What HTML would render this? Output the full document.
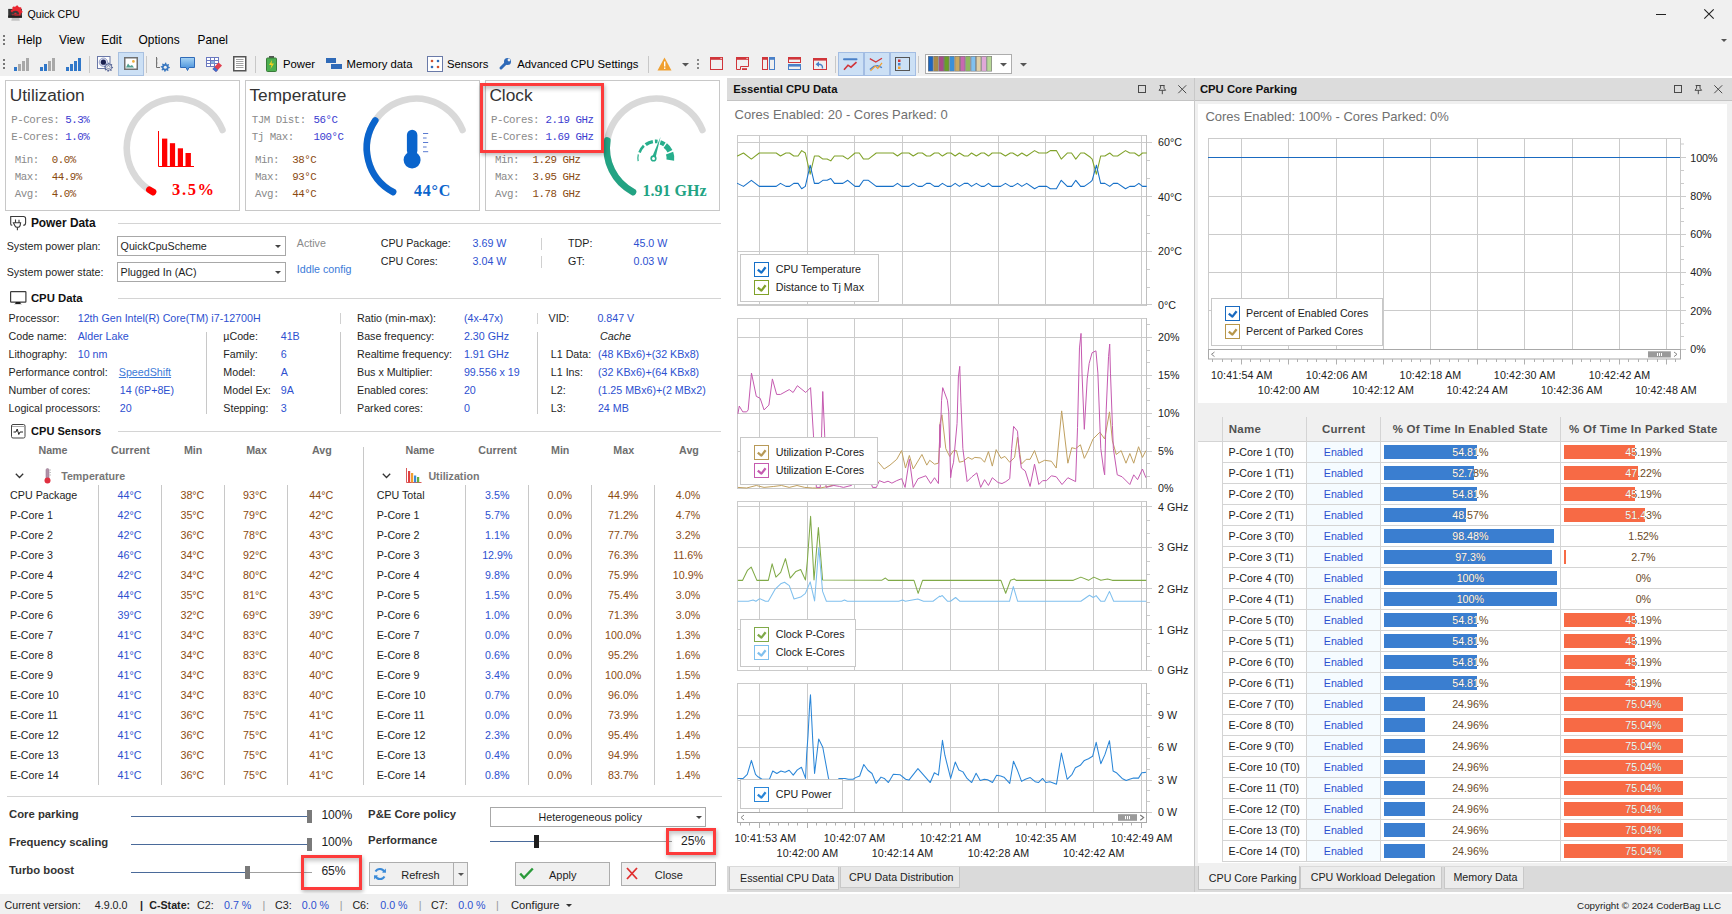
<!DOCTYPE html><html><head><meta charset="utf-8"><style>
html,body{margin:0;padding:0;}
body{width:1732px;height:914px;position:relative;overflow:hidden;background:#fff;font-family:"Liberation Sans", sans-serif;}
.t{position:absolute;line-height:0;white-space:pre;}
svg{position:absolute;overflow:visible;}
</style></head><body>
<div style="position:absolute;left:0px;top:0px;width:1732px;height:76px;background:#f0f0f0;"></div>
<svg style="left:4px;top:3px" width="24" height="20"><path d="M8 14.6 H15.2 L15.8 17.8 H7.3 Z" fill="#c4c4c4"/><rect x="4.2" y="5.9" width="13.7" height="8.8" fill="#333"/><polygon points="18.50,8.30 18.39,9.45 17.13,10.18 16.67,11.02 16.77,12.47 15.88,13.21 14.48,12.83 13.56,13.11 12.60,14.20 11.45,14.09 10.72,12.83 9.88,12.37 8.43,12.47 7.69,11.58 8.07,10.18 7.79,9.26 6.70,8.30 6.81,7.15 8.07,6.42 8.53,5.58 8.43,4.13 9.32,3.39 10.72,3.77 11.64,3.49 12.60,2.40 13.75,2.51 14.48,3.77 15.32,4.23 16.77,4.13 17.51,5.02 17.13,6.42 17.41,7.34" fill="#ea2630"/><path d="M7.6 11.5 A3.8 3.8 0 0 1 15.2 11.5 Z" fill="#3a3a3a"/><ellipse cx="11.4" cy="10.4" rx="1.2" ry="0.7" fill="#ea2630"/><rect x="4.2" y="12.6" width="13.7" height="2.1" fill="#222"/></svg>
<div class="t" style="top:13.62px;font-size:10.6px;color:#000;left:27.5px;">Quick CPU</div>
<div style="position:absolute;left:1656px;top:14px;width:10px;height:1.2px;background:#222;"></div>
<svg style="left:1704px;top:9px" width="10" height="10"><path d="M0.3 0.3 L9.7 9.7 M9.7 0.3 L0.3 9.7" stroke="#222" stroke-width="1.1"/></svg>
<div style="position:absolute;left:3px;top:35px;width:2px;height:2px;background:#777;"></div>
<div style="position:absolute;left:3px;top:39px;width:2px;height:2px;background:#777;"></div>
<div style="position:absolute;left:3px;top:43px;width:2px;height:2px;background:#777;"></div>
<div class="t" style="top:40.07px;font-size:11.9px;color:#000;left:17.3px;">Help</div>
<div class="t" style="top:40.07px;font-size:11.9px;color:#000;left:59px;">View</div>
<div class="t" style="top:40.07px;font-size:11.9px;color:#000;left:101.3px;">Edit</div>
<div class="t" style="top:40.07px;font-size:11.9px;color:#000;left:138.6px;">Options</div>
<div class="t" style="top:40.07px;font-size:11.9px;color:#000;left:197.5px;">Panel</div>
<svg style="left:1721px;top:39px" width="6" height="3"><path d="M0 0 L6 0 L3 3 Z" fill="#555"/></svg>
<div style="position:absolute;left:3px;top:59px;width:2px;height:2px;background:#777;"></div>
<div style="position:absolute;left:3px;top:63px;width:2px;height:2px;background:#777;"></div>
<div style="position:absolute;left:3px;top:67px;width:2px;height:2px;background:#777;"></div>
<svg style="left:14px;top:57px" width="16" height="14"><rect x="0" y="10" width="3" height="4" fill="#2f77c9"/><rect x="4" y="7" width="3" height="7" fill="#a8a8a8"/><rect x="8" y="4" width="3" height="10" fill="#a8a8a8"/><rect x="12" y="1" width="3" height="13" fill="#a8a8a8"/></svg>
<svg style="left:40px;top:57px" width="16" height="14"><rect x="0" y="10" width="3" height="4" fill="#2f77c9"/><rect x="4" y="7" width="3" height="7" fill="#2f77c9"/><rect x="8" y="4" width="3" height="10" fill="#a8a8a8"/><rect x="12" y="1" width="3" height="13" fill="#a8a8a8"/></svg>
<svg style="left:66px;top:57px" width="16" height="14"><rect x="0" y="10" width="3" height="4" fill="#2f77c9"/><rect x="4" y="7" width="3" height="7" fill="#2f77c9"/><rect x="8" y="4" width="3" height="10" fill="#2f77c9"/><rect x="12" y="1" width="3" height="13" fill="#2f77c9"/></svg>
<div style="position:absolute;left:89px;top:56px;width:1px;height:17px;background:#c8c8c8;"></div>
<div style="position:absolute;left:146px;top:56px;width:1px;height:17px;background:#c8c8c8;"></div>
<div style="position:absolute;left:255px;top:56px;width:1px;height:17px;background:#c8c8c8;"></div>
<svg style="left:96px;top:55px" width="20" height="20"><rect x="1.5" y="1.5" width="12.5" height="12" fill="#fff" stroke="#6a78a8" stroke-width="1"/><circle cx="7.4" cy="7.2" r="4.2" fill="#d8dcf0" stroke="#8a94c0" stroke-width="0.8"/><circle cx="7.4" cy="7.2" r="2.6" fill="#1a2050"/><polygon points="17.10,12.20 17.01,13.10 15.64,13.50 15.33,14.09 15.75,15.45 15.06,16.02 13.80,15.34 13.16,15.53 12.50,16.80 11.60,16.71 11.20,15.34 10.61,15.03 9.25,15.45 8.68,14.76 9.36,13.50 9.17,12.86 7.90,12.20 7.99,11.30 9.36,10.90 9.67,10.31 9.25,8.95 9.94,8.38 11.20,9.06 11.84,8.87 12.50,7.60 13.40,7.69 13.80,9.06 14.39,9.37 15.75,8.95 16.32,9.64 15.64,10.90 15.83,11.54" fill="#5a6898"/><circle cx="12.5" cy="12.2" r="1.3" fill="#f0f0f0"/><circle cx="12.5" cy="12.2" r="2.3" fill="none" stroke="#f0f0f0" stroke-width="0.9"/></svg>
<div style="position:absolute;left:118px;top:52px;width:26px;height:24px;background:#cce0f5;border:1px solid #a8c0e0;box-sizing:border-box;"></div>
<svg style="left:124px;top:57px" width="14" height="13"><rect x="0.75" y="0.75" width="12.5" height="11.5" fill="#fff" stroke="#707070" stroke-width="1.5"/><path d="M2 10.5 L4 6.5 L6 9 L8 8 L10 10.5 Z" fill="#50a090"/><circle cx="9.4" cy="4.4" r="1.4" fill="#f0b040"/></svg>
<svg style="left:155px;top:56px" width="16" height="17"><path d="M1.5 1 V11.5 H5" fill="none" stroke="#707070" stroke-width="1"/><path d="M1.5 3 H3 M1.5 5 H2.5 M1.5 7 H3 M1.5 9 H2.5" stroke="#909090" stroke-width="0.8"/><polygon points="14.90,11.20 14.81,12.10 13.35,12.46 13.04,13.03 13.55,14.45 12.86,15.02 11.56,14.25 10.94,14.44 10.30,15.80 9.40,15.71 9.04,14.25 8.47,13.94 7.05,14.45 6.48,13.76 7.25,12.46 7.06,11.84 5.70,11.20 5.79,10.30 7.25,9.94 7.56,9.37 7.05,7.95 7.74,7.38 9.04,8.15 9.66,7.96 10.30,6.60 11.20,6.69 11.56,8.15 12.13,8.46 13.55,7.95 14.12,8.64 13.35,9.94 13.54,10.56" fill="#3a78c0"/><circle cx="10.3" cy="11.2" r="1.5" fill="#f0f0f0"/></svg>
<svg style="left:179px;top:56px" width="17" height="16"><defs><linearGradient id="cb" x1="0" y1="0" x2="0" y2="1"><stop offset="0" stop-color="#a8d4f4"/><stop offset="1" stop-color="#3a88d8"/></linearGradient></defs><path d="M1.5 1.5 H15.5 V11.5 H10 L8.5 14.5 L7 11.5 H1.5 Z" fill="url(#cb)" stroke="#2f6ab8" stroke-width="1"/></svg>
<svg style="left:205px;top:56px" width="18" height="17"><rect x="1.5" y="1.5" width="12" height="9" fill="#fff" stroke="#6a78c0"/><path d="M1.5 4.5 H13.5 M1.5 7.5 H13.5 M5.5 1.5 V10.5 M9.5 1.5 V10.5" stroke="#6a78c0" stroke-width="1"/><rect x="6" y="5" width="3.5" height="2.5" fill="#8ab0e0"/><path d="M7.5 13 L13.5 6.5 L17 9.5 L11 16 Z" fill="#e04050"/><path d="M7.5 13 L9.5 11 L13 14 L11 16 Z" fill="#3a70d0"/></svg>
<svg style="left:233px;top:56px" width="14" height="16"><rect x="0.75" y="0.75" width="12" height="14" fill="#fff" stroke="#555" stroke-width="1.5"/><path d="M3 3.5 H10.5 M3 5.5 H10.5 M3 7.5 H10.5 M3 9.5 H10.5 M3 11.5 H10.5" stroke="#999" stroke-width="0.9"/></svg>
<svg style="left:266px;top:56px" width="11" height="16"><rect x="3" y="0" width="5" height="2" fill="#555"/><rect x="0.5" y="2" width="10" height="13.5" rx="1" fill="#4caf50" stroke="#3a7a3a"/><path d="M6 4 L3 9 H5.5 L4.5 13 L8 7.5 H5.5 Z" fill="#f5d020"/></svg>
<div class="t" style="top:64.38px;font-size:11.3px;color:#000;left:283px;">Power</div>
<svg style="left:326px;top:58px" width="16" height="12"><rect x="0" y="0" width="10" height="5" fill="#2f6ab8"/><rect x="5" y="6" width="11" height="5" fill="#2f6ab8"/></svg>
<div class="t" style="top:64.38px;font-size:11.3px;color:#000;left:346.5px;">Memory data</div>
<svg style="left:427px;top:56px" width="16" height="16"><rect x="0.5" y="0.5" width="15" height="15" fill="#fff" stroke="#6a7aa8"/><circle cx="5" cy="5" r="1.3" fill="#d05030"/><circle cx="11" cy="5" r="1.3" fill="#2f6ab8"/><circle cx="5" cy="11" r="1.3" fill="#2f6ab8"/><circle cx="11" cy="11" r="1.3" fill="#d05030"/></svg>
<div class="t" style="top:64.38px;font-size:11.3px;color:#000;left:447px;">Sensors</div>
<svg style="left:499px;top:57px" width="13" height="13"><path d="M2 11 L7 6" stroke="#2f6ab8" stroke-width="3" stroke-linecap="round"/><circle cx="8.5" cy="4.5" r="3.5" fill="#2f6ab8"/><circle cx="10" cy="3" r="1.4" fill="#f0f0f0"/></svg>
<div class="t" style="top:64.38px;font-size:11.3px;color:#000;left:517.2px;">Advanced CPU Settings</div>
<div style="position:absolute;left:648px;top:56px;width:1px;height:17px;background:#c8c8c8;"></div>
<svg style="left:657px;top:57px" width="15" height="14"><path d="M7.5 0.5 L14.5 13.5 H0.5 Z" fill="#f0a030"/><rect x="7" y="4.5" width="1.4" height="5" fill="#fff"/><rect x="7" y="10.5" width="1.4" height="1.4" fill="#fff"/></svg>
<svg style="left:682px;top:63px" width="7" height="4"><path d="M0 0 H7 L3.5 3.5 Z" fill="#555"/></svg>
<div style="position:absolute;left:697px;top:59px;width:2px;height:2px;background:#888;"></div>
<div style="position:absolute;left:697px;top:63px;width:2px;height:2px;background:#888;"></div>
<div style="position:absolute;left:697px;top:67px;width:2px;height:2px;background:#888;"></div>
<svg style="left:710px;top:57px" width="13" height="13"><rect x="0.5" y="0.5" width="12" height="12" fill="none" stroke="#d0353a"/><rect x="0" y="0" width="13" height="2.8" fill="#d0353a"/><circle cx="11.1" cy="1.4" r="0.6" fill="#fff"/></svg>
<svg style="left:736px;top:57px" width="14" height="13"><path d="M0.5 12.5 V0.5 H12.5 V9.5 H4.5 V12.5 Z" fill="none" stroke="#d0353a"/><rect x="0" y="0" width="13" height="2.8" fill="#d0353a"/><circle cx="11.1" cy="1.4" r="0.6" fill="#fff"/><rect x="6" y="11.2" width="5" height="1.8" fill="#d0353a"/></svg>
<svg style="left:762px;top:57px" width="14" height="13"><rect x="0.5" y="0.5" width="5" height="12" fill="none" stroke="#d0353a"/><rect x="0" y="0" width="6" height="2.8" fill="#d0353a"/><rect x="7.5" y="0.5" width="5" height="12" fill="none" stroke="#4a80c8"/><rect x="7" y="0" width="6" height="2.8" fill="#4a80c8"/></svg>
<svg style="left:788px;top:57px" width="14" height="13"><rect x="0.5" y="0.5" width="12" height="5" fill="none" stroke="#d0353a"/><rect x="0" y="0" width="13" height="2.6" fill="#d0353a"/><rect x="0.5" y="7.5" width="12" height="5" fill="none" stroke="#4a80c8"/><rect x="0" y="7" width="13" height="2.6" fill="#4a80c8"/></svg>
<svg style="left:813px;top:58px" width="14" height="12"><rect x="0.5" y="0.5" width="13" height="11" fill="none" stroke="#d0353a"/><rect x="0" y="0" width="14" height="2.6" fill="#d0353a"/><path d="M9.5 10.5 Q9.8 6.2 5.5 6.2" fill="none" stroke="#4a80c8" stroke-width="1.4"/><path d="M2.6 6.3 L6 3.6 L6 8.9 Z" fill="#4a80c8"/></svg>
<div style="position:absolute;left:835px;top:56px;width:1px;height:17px;background:#c8c8c8;"></div>
<div style="position:absolute;left:838px;top:52px;width:26px;height:24px;background:#cce0f5;border:1px solid #a3bde3;box-sizing:border-box;"></div>
<div style="position:absolute;left:864px;top:52px;width:26px;height:24px;background:#cce0f5;border:1px solid #a3bde3;box-sizing:border-box;"></div>
<div style="position:absolute;left:890px;top:52px;width:26px;height:24px;background:#cce0f5;border:1px solid #a3bde3;box-sizing:border-box;"></div>
<svg style="left:843px;top:57px" width="15" height="14"><path d="M1 2.2 H13.5" stroke="#4a80c8" stroke-width="2" stroke-linecap="round"/><path d="M1 12.8 L5 8.2 L8 10.2 L13.5 5.2" fill="none" stroke="#d0353a" stroke-width="1.6"/></svg>
<svg style="left:869px;top:57px" width="15" height="15"><path d="M0.8 1.6 L6.8 5 L13 1.2" fill="none" stroke="#d0353a" stroke-width="1.3"/><path d="M0.8 12.5 L4.8 9.3 L8.5 8.6 L13 10.6" fill="none" stroke="#4a80c8" stroke-width="1.2"/><path d="M1.5 13.8 L6.3 9 L8.8 11.4 L13 5.8" fill="none" stroke="#f0a030" stroke-width="1.2"/></svg>
<svg style="left:895px;top:57px" width="15" height="14"><rect x="0.5" y="0.5" width="14" height="13" fill="none" stroke="#555"/><rect x="3" y="2.5" width="2.5" height="2.5" fill="#d0353a"/><rect x="3" y="6" width="2.5" height="2.5" fill="#4a80c8"/><rect x="3" y="9.5" width="2.5" height="2.5" fill="#f0a030"/></svg>
<div style="position:absolute;left:918px;top:56px;width:1px;height:17px;background:#c8c8c8;"></div>
<div style="position:absolute;left:925px;top:54px;width:87px;height:20px;background:#fff;border:1px solid #adadad;box-sizing:border-box;"></div>
<svg style="left:928px;top:56px" width="66" height="16"><rect x="0.00" y="0" width="5.33" height="15.5" fill="#7a7a7a"/><rect x="0.60" y="0.6" width="4.1" height="14.3" fill="#1a66c0"/><rect x="5.33" y="0" width="5.33" height="15.5" fill="#7a7a7a"/><rect x="5.93" y="0.6" width="4.1" height="14.3" fill="#a88a48"/><rect x="10.66" y="0" width="5.33" height="15.5" fill="#7a7a7a"/><rect x="11.26" y="0.6" width="4.1" height="14.3" fill="#a84c88"/><rect x="15.99" y="0" width="5.33" height="15.5" fill="#7a7a7a"/><rect x="16.59" y="0.6" width="4.1" height="14.3" fill="#6a9e28"/><rect x="21.32" y="0" width="5.33" height="15.5" fill="#7a7a7a"/><rect x="21.92" y="0.6" width="4.1" height="14.3" fill="#3a90d8"/><rect x="26.65" y="0" width="5.33" height="15.5" fill="#7a7a7a"/><rect x="27.25" y="0.6" width="4.1" height="14.3" fill="#c8a860"/><rect x="31.98" y="0" width="5.33" height="15.5" fill="#7a7a7a"/><rect x="32.58" y="0.6" width="4.1" height="14.3" fill="#c868b0"/><rect x="37.31" y="0" width="5.33" height="15.5" fill="#7a7a7a"/><rect x="37.91" y="0.6" width="4.1" height="14.3" fill="#90b860"/><rect x="42.64" y="0" width="5.33" height="15.5" fill="#7a7a7a"/><rect x="43.24" y="0.6" width="4.1" height="14.3" fill="#80c0f0"/><rect x="47.97" y="0" width="5.33" height="15.5" fill="#7a7a7a"/><rect x="48.57" y="0.6" width="4.1" height="14.3" fill="#e0d0a8"/><rect x="53.30" y="0" width="5.33" height="15.5" fill="#7a7a7a"/><rect x="53.90" y="0.6" width="4.1" height="14.3" fill="#e0a8d8"/><rect x="58.63" y="0" width="5.33" height="15.5" fill="#7a7a7a"/><rect x="59.23" y="0.6" width="4.1" height="14.3" fill="#b8d898"/></svg>
<svg style="left:1000px;top:63px" width="7" height="4"><path d="M0 0 H7 L3.5 3.5 Z" fill="#555"/></svg>
<svg style="left:1020px;top:63px" width="7" height="4"><path d="M0 0 H7 L3.5 3.5 Z" fill="#555"/></svg>
<div style="position:absolute;left:5.25px;top:80px;width:235px;height:131px;border:1px solid #c8c8c8;box-sizing:border-box;background:#fff;"></div>
<div style="position:absolute;left:245.3px;top:80px;width:235px;height:131px;border:1px solid #c8c8c8;box-sizing:border-box;background:#fff;"></div>
<div style="position:absolute;left:485.2px;top:80px;width:235px;height:131px;border:1px solid #c8c8c8;box-sizing:border-box;background:#fff;"></div>
<div class="t" style="top:94.90px;font-size:17.3px;color:#333;left:9.8px;">Utilization</div>
<div class="t" style="top:120.43px;font-size:10.8px;color:#8a8a8a;font-family:'Liberation Mono', monospace;letter-spacing:-0.48px;left:11.2px;">P-Cores:</div>
<div class="t" style="top:120.43px;font-size:10.8px;color:#3b3bd0;font-family:'Liberation Mono', monospace;letter-spacing:-0.48px;left:65.3px;">5.3%</div>
<div class="t" style="top:136.93px;font-size:10.8px;color:#8a8a8a;font-family:'Liberation Mono', monospace;letter-spacing:-0.48px;left:11.2px;">E-Cores:</div>
<div class="t" style="top:136.93px;font-size:10.8px;color:#3b3bd0;font-family:'Liberation Mono', monospace;letter-spacing:-0.48px;left:65.3px;">1.0%</div>
<div class="t" style="top:159.83px;font-size:10.8px;color:#8a8a8a;font-family:'Liberation Mono', monospace;letter-spacing:-0.48px;left:14.8px;">Min:</div>
<div class="t" style="top:159.83px;font-size:10.8px;color:#8a4a10;font-family:'Liberation Mono', monospace;letter-spacing:-0.48px;left:51.7px;">0.0%</div>
<div class="t" style="top:177.13px;font-size:10.8px;color:#8a8a8a;font-family:'Liberation Mono', monospace;letter-spacing:-0.48px;left:14.8px;">Max:</div>
<div class="t" style="top:177.13px;font-size:10.8px;color:#8a4a10;font-family:'Liberation Mono', monospace;letter-spacing:-0.48px;left:51.7px;">44.9%</div>
<div class="t" style="top:194.33px;font-size:10.8px;color:#8a8a8a;font-family:'Liberation Mono', monospace;letter-spacing:-0.48px;left:14.8px;">Avg:</div>
<div class="t" style="top:194.33px;font-size:10.8px;color:#8a4a10;font-family:'Liberation Mono', monospace;letter-spacing:-0.48px;left:51.7px;">4.0%</div>
<svg style="left:0;top:0" width="1732" height="300"><path d="M153.06 191.99 A49.6 49.6 0 1 1 222.50 130.02" stroke="#d9d9d9" stroke-width="6.6" fill="none" stroke-linecap="round"/><path d="M153.06 191.99 A49.6 49.6 0 0 1 149.34 189.80" stroke="#ff0000" stroke-width="6.6" fill="none" stroke-linecap="round"/></svg>
<svg style="left:158px;top:131px" width="37" height="37"><path d="M0.5 0 V35.5 H36" stroke="#ff0000" stroke-width="1" fill="none"/><rect x="4" y="7.6" width="5.3" height="28" fill="#f00"/><rect x="11.9" y="12.2" width="5.2" height="23.4" fill="#f00"/><rect x="19.8" y="17.3" width="5.2" height="18.3" fill="#f00"/><rect x="27.5" y="22" width="5.4" height="13.6" fill="#f00"/></svg>
<div class="t" style="top:190.43px;font-size:16.5px;color:#ff0000;font-family:'Liberation Serif', serif;font-weight:bold;letter-spacing:1.6px;left:172.1px;">3.5%</div>
<div class="t" style="top:94.90px;font-size:17.3px;color:#333;left:249.4px;">Temperature</div>
<div class="t" style="top:120.43px;font-size:10.8px;color:#8a8a8a;font-family:'Liberation Mono', monospace;letter-spacing:-0.48px;left:251.8px;">TJM Dist:</div>
<div class="t" style="top:120.43px;font-size:10.8px;color:#3b3bd0;font-family:'Liberation Mono', monospace;letter-spacing:-0.48px;left:313.5px;">56°C</div>
<div class="t" style="top:136.93px;font-size:10.8px;color:#8a8a8a;font-family:'Liberation Mono', monospace;letter-spacing:-0.48px;left:251.8px;">Tj Max:</div>
<div class="t" style="top:136.93px;font-size:10.8px;color:#3b3bd0;font-family:'Liberation Mono', monospace;letter-spacing:-0.48px;left:313.5px;">100°C</div>
<div class="t" style="top:159.83px;font-size:10.8px;color:#8a8a8a;font-family:'Liberation Mono', monospace;letter-spacing:-0.48px;left:254.9px;">Min:</div>
<div class="t" style="top:159.83px;font-size:10.8px;color:#8a4a10;font-family:'Liberation Mono', monospace;letter-spacing:-0.48px;left:292.2px;">38°C</div>
<div class="t" style="top:177.13px;font-size:10.8px;color:#8a8a8a;font-family:'Liberation Mono', monospace;letter-spacing:-0.48px;left:254.9px;">Max:</div>
<div class="t" style="top:177.13px;font-size:10.8px;color:#8a4a10;font-family:'Liberation Mono', monospace;letter-spacing:-0.48px;left:292.2px;">93°C</div>
<div class="t" style="top:194.33px;font-size:10.8px;color:#8a8a8a;font-family:'Liberation Mono', monospace;letter-spacing:-0.48px;left:254.9px;">Avg:</div>
<div class="t" style="top:194.33px;font-size:10.8px;color:#8a4a10;font-family:'Liberation Mono', monospace;letter-spacing:-0.48px;left:292.2px;">44°C</div>
<svg style="left:0;top:0" width="1732" height="300"><path d="M393.11 191.99 A49.6 49.6 0 1 1 462.55 130.02" stroke="#d9d9d9" stroke-width="6.6" fill="none" stroke-linecap="round"/><path d="M393.11 191.99 A49.6 49.6 0 0 1 375.28 120.46" stroke="#0a64cc" stroke-width="6.6" fill="none" stroke-linecap="round"/></svg>
<svg style="left:403px;top:129px" width="26" height="40"><rect x="3.9" y="0.8" width="10.5" height="26" rx="5.25" fill="#0a64cc"/><circle cx="9.1" cy="31" r="8.5" fill="#0a64cc"/><path d="M20 4.5 H25.2 M20 9 H23.6 M20 13.5 H25.2 M20 18 H23.6 M20 22.7 H25.2" stroke="#5a7ad0" stroke-width="1"/></svg>
<div class="t" style="top:190.80px;font-size:16px;color:#0a64cc;font-family:'Liberation Serif', serif;font-weight:bold;letter-spacing:0.8px;left:174px;margin-left:240px;">44°C</div>
<div class="t" style="top:94.90px;font-size:17.3px;color:#333;left:489.4px;">Clock</div>
<div class="t" style="top:120.43px;font-size:10.8px;color:#8a8a8a;font-family:'Liberation Mono', monospace;letter-spacing:-0.48px;left:491.1px;">P-Cores:</div>
<div class="t" style="top:120.43px;font-size:10.8px;color:#3b3bd0;font-family:'Liberation Mono', monospace;letter-spacing:-0.48px;left:545.6px;">2.19 GHz</div>
<div class="t" style="top:136.93px;font-size:10.8px;color:#8a8a8a;font-family:'Liberation Mono', monospace;letter-spacing:-0.48px;left:491.1px;">E-Cores:</div>
<div class="t" style="top:136.93px;font-size:10.8px;color:#3b3bd0;font-family:'Liberation Mono', monospace;letter-spacing:-0.48px;left:545.6px;">1.69 GHz</div>
<div class="t" style="top:159.83px;font-size:10.8px;color:#8a8a8a;font-family:'Liberation Mono', monospace;letter-spacing:-0.48px;left:495px;">Min:</div>
<div class="t" style="top:159.83px;font-size:10.8px;color:#8a4a10;font-family:'Liberation Mono', monospace;letter-spacing:-0.48px;left:532.5px;">1.29 GHz</div>
<div class="t" style="top:177.13px;font-size:10.8px;color:#8a8a8a;font-family:'Liberation Mono', monospace;letter-spacing:-0.48px;left:495px;">Max:</div>
<div class="t" style="top:177.13px;font-size:10.8px;color:#8a4a10;font-family:'Liberation Mono', monospace;letter-spacing:-0.48px;left:532.5px;">3.95 GHz</div>
<div class="t" style="top:194.33px;font-size:10.8px;color:#8a8a8a;font-family:'Liberation Mono', monospace;letter-spacing:-0.48px;left:495px;">Avg:</div>
<div class="t" style="top:194.33px;font-size:10.8px;color:#8a4a10;font-family:'Liberation Mono', monospace;letter-spacing:-0.48px;left:532.5px;">1.78 GHz</div>
<svg style="left:0;top:0" width="1732" height="300"><path d="M633.01 191.99 A49.6 49.6 0 1 1 702.45 130.02" stroke="#d9d9d9" stroke-width="6.6" fill="none" stroke-linecap="round"/><path d="M633.01 191.99 A49.6 49.6 0 0 1 607.31 140.44" stroke="#22a383" stroke-width="6.6" fill="none" stroke-linecap="round"/></svg>
<svg style="left:630px;top:125px" width="50" height="40"><path d="M8.17 36.21 A17.9 17.9 0 0 1 8.29 29.38" stroke="#27ae8c" stroke-width="1.2" fill="none"/><path d="M9.54 27.50 A17.2 17.2 0 0 1 13.85 20.73" stroke="#27ae8c" stroke-width="2.6" fill="none"/><path d="M15.72 19.72 A16.75 16.75 0 0 1 22.89 16.60" stroke="#27ae8c" stroke-width="3.5" fill="none"/><path d="M24.93 16.42 A16.7 16.7 0 0 1 27.55 16.49" stroke="#27ae8c" stroke-width="3.6" fill="none"/><path d="M30.29 17.43 A16.3 16.3 0 0 1 34.44 19.28" stroke="#27ae8c" stroke-width="4.4" fill="none"/><path d="M35.28 20.52 A15.75 15.75 0 0 1 39.96 26.20" stroke="#27ae8c" stroke-width="5.5" fill="none"/><path d="M39.57 28.09 A14.65 14.65 0 0 1 40.31 35.14" stroke="#27ae8c" stroke-width="7.7" fill="none"/><path d="M21.79 32.84 L30.59 11.84 L25.21 33.96 Z" fill="#27ae8c"/><circle cx="23.5" cy="33.4" r="3.1" fill="#27ae8c"/><circle cx="23.5" cy="33.4" r="1.5" fill="#fff"/></svg>
<div class="t" style="top:190.80px;font-size:16px;color:#22a383;font-family:'Liberation Serif', serif;font-weight:bold;left:642.5px;">1.91 GHz</div>
<div style="position:absolute;left:479.9px;top:82.9px;width:124.2px;height:70px;border:3px solid #fd3b3b;box-sizing:border-box;box-shadow:1px 2px 4px rgba(0,0,0,0.28), inset 1px 3px 4px rgba(0,0,0,0.22);"></div>
<svg style="left:10px;top:215px" width="18" height="17"><path d="M0.7 9 V1.5 H13.5 Q15.6 1.5 15.6 3.6 V8 Q15.6 10.3 13.2 10.3 M0.7 9 Q0.7 10.3 2.3 10.3" fill="none" stroke="#3a3a3a" stroke-width="1.1"/><path d="M3.4 7.7 H10.6 L10.1 10.8 Q9.5 12.4 7.5 12.4 Q5.5 12.4 4.9 10.8 Z M7.4 12.4 V15.3 M5.5 4.4 V7.7 M9 4.8 V7.7" fill="#fff" stroke="#3a3a3a" stroke-width="1.1"/></svg>
<div class="t" style="top:222.97px;font-size:11.9px;color:#111;font-weight:bold;left:30.9px;">Power Data</div>
<div style="position:absolute;left:118px;top:223px;width:603px;height:1px;background:#d4d4d4;"></div>
<div class="t" style="top:246.09px;font-size:10.7px;color:#1e1e1e;left:6.7px;">System power plan:</div>
<div class="t" style="top:272.09px;font-size:10.7px;color:#1e1e1e;left:6.7px;">System power state:</div>
<div style="position:absolute;left:117.2px;top:236.3px;width:168.6px;height:19.4px;border:1px solid #a8a8a8;box-sizing:border-box;background:#fff;"></div>
<div class="t" style="top:246.49px;font-size:10.7px;color:#1e1e1e;left:120.6px;">QuickCpuScheme</div>
<svg style="left:275px;top:244.8px" width="6" height="3"><path d="M0 0 H6 L3 3 Z" fill="#444"/></svg>
<div style="position:absolute;left:117.2px;top:262.3px;width:168.6px;height:19.4px;border:1px solid #a8a8a8;box-sizing:border-box;background:#fff;"></div>
<div class="t" style="top:272.19px;font-size:10.7px;color:#1e1e1e;left:120.6px;">Plugged In (AC)</div>
<svg style="left:275px;top:270.8px" width="6" height="3"><path d="M0 0 H6 L3 3 Z" fill="#444"/></svg>
<div class="t" style="top:243.09px;font-size:10.7px;color:#8a8a8a;left:296.8px;">Active</div>
<div class="t" style="top:268.99px;font-size:10.7px;color:#3c7ad8;left:296.8px;">Iddle config</div>
<div class="t" style="top:243.09px;font-size:10.7px;color:#1e1e1e;left:380.7px;">CPU Package:</div>
<div class="t" style="top:243.09px;font-size:10.7px;color:#2d50d0;left:472.6px;">3.69 W</div>
<div class="t" style="top:261.49px;font-size:10.7px;color:#1e1e1e;left:380.7px;">CPU Cores:</div>
<div class="t" style="top:261.49px;font-size:10.7px;color:#2d50d0;left:472.6px;">3.04 W</div>
<div style="position:absolute;left:541px;top:238px;width:1px;height:12px;background:#d0d0d0;"></div>
<div style="position:absolute;left:541px;top:256px;width:1px;height:12px;background:#d0d0d0;"></div>
<div class="t" style="top:243.09px;font-size:10.7px;color:#1e1e1e;left:568px;">TDP:</div>
<div class="t" style="top:243.09px;font-size:10.7px;color:#2d50d0;left:633.5px;">45.0 W</div>
<div class="t" style="top:261.49px;font-size:10.7px;color:#1e1e1e;left:568px;">GT:</div>
<div class="t" style="top:261.49px;font-size:10.7px;color:#2d50d0;left:633.5px;">0.03 W</div>
<svg style="left:10px;top:291px" width="17" height="15"><rect x="0.6" y="0.7" width="15.3" height="10.4" rx="0.6" fill="#fff" stroke="#3c3c3c" stroke-width="1.2"/><path d="M5.8 11.3 H10.2 L10.9 13 H5.1 Z" fill="#000"/><path d="M4 13.3 H12" stroke="#ccc" stroke-width="0.8"/></svg>
<div class="t" style="top:297.86px;font-size:11.35px;color:#111;font-weight:bold;left:30.9px;">CPU Data</div>
<div style="position:absolute;left:118px;top:298px;width:603px;height:1px;background:#d4d4d4;"></div>
<div class="t" style="top:318.39px;font-size:10.7px;color:#1e1e1e;left:8.5px;">Processor:</div>
<div class="t" style="top:318.39px;font-size:10.7px;color:#2d50d0;left:77.7px;">12th Gen Intel(R) Core(TM) i7-12700H</div>
<div class="t" style="top:336.29px;font-size:10.7px;color:#1e1e1e;left:8.5px;">Code name:</div>
<div class="t" style="top:336.29px;font-size:10.7px;color:#2d50d0;left:77.7px;">Alder Lake</div>
<div class="t" style="top:354.19px;font-size:10.7px;color:#1e1e1e;left:8.5px;">Lithography:</div>
<div class="t" style="top:354.19px;font-size:10.7px;color:#2d50d0;left:77.7px;">10 nm</div>
<div class="t" style="top:372.09px;font-size:10.7px;color:#1e1e1e;left:8.5px;">Performance control:</div>
<div class="t" style="top:372.09px;font-size:10.7px;color:#3c7ad8;text-decoration:underline;left:118.8px;">SpeedShift</div>
<div class="t" style="top:389.99px;font-size:10.7px;color:#1e1e1e;left:8.5px;">Number of cores:</div>
<div class="t" style="top:389.99px;font-size:10.7px;color:#2d50d0;left:119.7px;">14 (6P+8E)</div>
<div class="t" style="top:407.89px;font-size:10.7px;color:#1e1e1e;left:8.5px;">Logical processors:</div>
<div class="t" style="top:407.89px;font-size:10.7px;color:#2d50d0;left:119.7px;">20</div>
<div style="position:absolute;left:206px;top:332px;width:1px;height:82px;background:#c8c8c8;"></div>
<div class="t" style="top:336.29px;font-size:10.7px;color:#1e1e1e;left:223.3px;">µCode:</div>
<div class="t" style="top:336.29px;font-size:10.7px;color:#2d50d0;left:280.7px;">41B</div>
<div class="t" style="top:354.19px;font-size:10.7px;color:#1e1e1e;left:223.3px;">Family:</div>
<div class="t" style="top:354.19px;font-size:10.7px;color:#2d50d0;left:280.7px;">6</div>
<div class="t" style="top:372.09px;font-size:10.7px;color:#1e1e1e;left:223.3px;">Model:</div>
<div class="t" style="top:372.09px;font-size:10.7px;color:#2d50d0;left:280.7px;">A</div>
<div class="t" style="top:389.99px;font-size:10.7px;color:#1e1e1e;left:223.3px;">Model Ex:</div>
<div class="t" style="top:389.99px;font-size:10.7px;color:#2d50d0;left:280.7px;">9A</div>
<div class="t" style="top:407.89px;font-size:10.7px;color:#1e1e1e;left:223.3px;">Stepping:</div>
<div class="t" style="top:407.89px;font-size:10.7px;color:#2d50d0;left:280.7px;">3</div>
<div style="position:absolute;left:340px;top:313px;width:1px;height:11px;background:#d0d0d0;"></div>
<div style="position:absolute;left:340px;top:332px;width:1px;height:82px;background:#c8c8c8;"></div>
<div class="t" style="top:318.39px;font-size:10.7px;color:#1e1e1e;left:357px;">Ratio (min-max):</div>
<div class="t" style="top:318.39px;font-size:10.7px;color:#2d50d0;left:463.9px;">(4x-47x)</div>
<div class="t" style="top:336.29px;font-size:10.7px;color:#1e1e1e;left:357px;">Base frequency:</div>
<div class="t" style="top:336.29px;font-size:10.7px;color:#2d50d0;left:463.9px;">2.30 GHz</div>
<div class="t" style="top:354.19px;font-size:10.7px;color:#1e1e1e;left:357px;">Realtime frequency:</div>
<div class="t" style="top:354.19px;font-size:10.7px;color:#2d50d0;left:463.9px;">1.91 GHz</div>
<div class="t" style="top:372.09px;font-size:10.7px;color:#1e1e1e;left:357px;">Bus x Multiplier:</div>
<div class="t" style="top:372.09px;font-size:10.7px;color:#2d50d0;left:463.9px;">99.556 x 19</div>
<div class="t" style="top:389.99px;font-size:10.7px;color:#1e1e1e;left:357px;">Enabled cores:</div>
<div class="t" style="top:389.99px;font-size:10.7px;color:#2d50d0;left:463.9px;">20</div>
<div class="t" style="top:407.89px;font-size:10.7px;color:#1e1e1e;left:357px;">Parked cores:</div>
<div class="t" style="top:407.89px;font-size:10.7px;color:#2d50d0;left:463.9px;">0</div>
<div style="position:absolute;left:537px;top:313px;width:1px;height:11px;background:#d0d0d0;"></div>
<div style="position:absolute;left:537px;top:332px;width:1px;height:82px;background:#c8c8c8;"></div>
<div class="t" style="top:318.39px;font-size:10.7px;color:#1e1e1e;left:548.5px;">VID:</div>
<div class="t" style="top:318.39px;font-size:10.7px;color:#2d50d0;left:597.4px;">0.847 V</div>
<div class="t" style="top:336.29px;font-size:10.7px;color:#1e1e1e;font-style:italic;left:600px;">Cache</div>
<div class="t" style="top:354.19px;font-size:10.7px;color:#1e1e1e;left:550.8px;">L1 Data:</div>
<div class="t" style="top:354.19px;font-size:10.7px;color:#2d50d0;left:597.9px;">(48 KBx6)+(32 KBx8)</div>
<div class="t" style="top:372.09px;font-size:10.7px;color:#1e1e1e;left:550.8px;">L1 Ins:</div>
<div class="t" style="top:372.09px;font-size:10.7px;color:#2d50d0;left:597.9px;">(32 KBx6)+(64 KBx8)</div>
<div class="t" style="top:389.99px;font-size:10.7px;color:#1e1e1e;left:550.8px;">L2:</div>
<div class="t" style="top:389.99px;font-size:10.7px;color:#2d50d0;left:597.9px;">(1.25 MBx6)+(2 MBx2)</div>
<div class="t" style="top:407.89px;font-size:10.7px;color:#1e1e1e;left:550.8px;">L3:</div>
<div class="t" style="top:407.89px;font-size:10.7px;color:#2d50d0;left:597.9px;">24 MB</div>
<svg style="left:10.5px;top:423.5px" width="15" height="15"><rect x="0.5" y="0.5" width="13.5" height="13.5" rx="1.5" fill="#fff" stroke="#444"/><path d="M1 2.5 H13.5" stroke="#aaa"/><path d="M2.5 8 H5 L6.2 5 L7.8 10.5 L9 8 H12" fill="none" stroke="#222" stroke-width="1"/></svg>
<div class="t" style="top:430.87px;font-size:11.05px;color:#111;font-weight:bold;left:31.1px;">CPU Sensors</div>
<div style="position:absolute;left:118px;top:431px;width:603px;height:1px;background:#d4d4d4;"></div>
<div style="position:absolute;left:363px;top:447px;width:1px;height:338px;background:#c8c8c8;"></div>
<div class="t" style="top:449.99px;font-size:10.7px;color:#6e6e6e;font-weight:bold;left:-147px;width:400px;text-align:center;">Name</div>
<div class="t" style="top:449.99px;font-size:10.7px;color:#6e6e6e;font-weight:bold;left:-69.6px;width:400px;text-align:center;">Current</div>
<div class="t" style="top:449.99px;font-size:10.7px;color:#6e6e6e;font-weight:bold;left:-6.900000000000006px;width:400px;text-align:center;">Min</div>
<div class="t" style="top:449.99px;font-size:10.7px;color:#6e6e6e;font-weight:bold;left:56.60000000000002px;width:400px;text-align:center;">Max</div>
<div class="t" style="top:449.99px;font-size:10.7px;color:#6e6e6e;font-weight:bold;left:121.89999999999998px;width:400px;text-align:center;">Avg</div>
<svg style="left:14.9px;top:473px" width="9" height="6"><path d="M0.8 0.8 L4.5 4.5 L8.2 0.8" fill="none" stroke="#333" stroke-width="1.3"/></svg>
<svg style="left:43.5px;top:467.5px" width="8" height="16"><rect x="2" y="0.5" width="3" height="11" rx="1.5" fill="#b090a8" stroke="#9a7a90" stroke-width="0.6"/><circle cx="3.5" cy="12.5" r="3" fill="#e03040"/><path d="M5.5 2 H7 M5.5 4.5 H7 M5.5 7 H7" stroke="#999" stroke-width="0.6"/></svg>
<div class="t" style="top:476.19px;font-size:10.7px;color:#777;font-weight:bold;left:61.2px;">Temperature</div>
<div style="position:absolute;left:98px;top:485px;width:1px;height:300px;background:#c8c8c8;"></div>
<div style="position:absolute;left:161px;top:485px;width:1px;height:300px;background:#c8c8c8;"></div>
<div style="position:absolute;left:224px;top:485px;width:1px;height:300px;background:#c8c8c8;"></div>
<div style="position:absolute;left:287px;top:485px;width:1px;height:300px;background:#c8c8c8;"></div>
<div class="t" style="top:495.09px;font-size:10.7px;color:#1e1e1e;left:10.1px;">CPU Package</div>
<div class="t" style="top:495.09px;font-size:10.7px;color:#2d50d0;left:-70.5px;width:400px;text-align:center;">44°C</div>
<div class="t" style="top:495.09px;font-size:10.7px;color:#8a4a10;left:-7.599999999999994px;width:400px;text-align:center;">38°C</div>
<div class="t" style="top:495.09px;font-size:10.7px;color:#8a4a10;left:55px;width:400px;text-align:center;">93°C</div>
<div class="t" style="top:495.09px;font-size:10.7px;color:#8a4a10;left:121.30000000000001px;width:400px;text-align:center;">44°C</div>
<div class="t" style="top:515.09px;font-size:10.7px;color:#1e1e1e;left:10.1px;">P-Core 1</div>
<div class="t" style="top:515.09px;font-size:10.7px;color:#2d50d0;left:-70.5px;width:400px;text-align:center;">42°C</div>
<div class="t" style="top:515.09px;font-size:10.7px;color:#8a4a10;left:-7.599999999999994px;width:400px;text-align:center;">35°C</div>
<div class="t" style="top:515.09px;font-size:10.7px;color:#8a4a10;left:55px;width:400px;text-align:center;">79°C</div>
<div class="t" style="top:515.09px;font-size:10.7px;color:#8a4a10;left:121.30000000000001px;width:400px;text-align:center;">42°C</div>
<div class="t" style="top:535.09px;font-size:10.7px;color:#1e1e1e;left:10.1px;">P-Core 2</div>
<div class="t" style="top:535.09px;font-size:10.7px;color:#2d50d0;left:-70.5px;width:400px;text-align:center;">42°C</div>
<div class="t" style="top:535.09px;font-size:10.7px;color:#8a4a10;left:-7.599999999999994px;width:400px;text-align:center;">36°C</div>
<div class="t" style="top:535.09px;font-size:10.7px;color:#8a4a10;left:55px;width:400px;text-align:center;">78°C</div>
<div class="t" style="top:535.09px;font-size:10.7px;color:#8a4a10;left:121.30000000000001px;width:400px;text-align:center;">43°C</div>
<div class="t" style="top:555.09px;font-size:10.7px;color:#1e1e1e;left:10.1px;">P-Core 3</div>
<div class="t" style="top:555.09px;font-size:10.7px;color:#2d50d0;left:-70.5px;width:400px;text-align:center;">46°C</div>
<div class="t" style="top:555.09px;font-size:10.7px;color:#8a4a10;left:-7.599999999999994px;width:400px;text-align:center;">34°C</div>
<div class="t" style="top:555.09px;font-size:10.7px;color:#8a4a10;left:55px;width:400px;text-align:center;">92°C</div>
<div class="t" style="top:555.09px;font-size:10.7px;color:#8a4a10;left:121.30000000000001px;width:400px;text-align:center;">43°C</div>
<div class="t" style="top:575.09px;font-size:10.7px;color:#1e1e1e;left:10.1px;">P-Core 4</div>
<div class="t" style="top:575.09px;font-size:10.7px;color:#2d50d0;left:-70.5px;width:400px;text-align:center;">42°C</div>
<div class="t" style="top:575.09px;font-size:10.7px;color:#8a4a10;left:-7.599999999999994px;width:400px;text-align:center;">34°C</div>
<div class="t" style="top:575.09px;font-size:10.7px;color:#8a4a10;left:55px;width:400px;text-align:center;">80°C</div>
<div class="t" style="top:575.09px;font-size:10.7px;color:#8a4a10;left:121.30000000000001px;width:400px;text-align:center;">42°C</div>
<div class="t" style="top:595.09px;font-size:10.7px;color:#1e1e1e;left:10.1px;">P-Core 5</div>
<div class="t" style="top:595.09px;font-size:10.7px;color:#2d50d0;left:-70.5px;width:400px;text-align:center;">44°C</div>
<div class="t" style="top:595.09px;font-size:10.7px;color:#8a4a10;left:-7.599999999999994px;width:400px;text-align:center;">35°C</div>
<div class="t" style="top:595.09px;font-size:10.7px;color:#8a4a10;left:55px;width:400px;text-align:center;">81°C</div>
<div class="t" style="top:595.09px;font-size:10.7px;color:#8a4a10;left:121.30000000000001px;width:400px;text-align:center;">43°C</div>
<div class="t" style="top:615.09px;font-size:10.7px;color:#1e1e1e;left:10.1px;">P-Core 6</div>
<div class="t" style="top:615.09px;font-size:10.7px;color:#2d50d0;left:-70.5px;width:400px;text-align:center;">39°C</div>
<div class="t" style="top:615.09px;font-size:10.7px;color:#8a4a10;left:-7.599999999999994px;width:400px;text-align:center;">32°C</div>
<div class="t" style="top:615.09px;font-size:10.7px;color:#8a4a10;left:55px;width:400px;text-align:center;">69°C</div>
<div class="t" style="top:615.09px;font-size:10.7px;color:#8a4a10;left:121.30000000000001px;width:400px;text-align:center;">39°C</div>
<div class="t" style="top:635.09px;font-size:10.7px;color:#1e1e1e;left:10.1px;">E-Core 7</div>
<div class="t" style="top:635.09px;font-size:10.7px;color:#2d50d0;left:-70.5px;width:400px;text-align:center;">41°C</div>
<div class="t" style="top:635.09px;font-size:10.7px;color:#8a4a10;left:-7.599999999999994px;width:400px;text-align:center;">34°C</div>
<div class="t" style="top:635.09px;font-size:10.7px;color:#8a4a10;left:55px;width:400px;text-align:center;">83°C</div>
<div class="t" style="top:635.09px;font-size:10.7px;color:#8a4a10;left:121.30000000000001px;width:400px;text-align:center;">40°C</div>
<div class="t" style="top:655.09px;font-size:10.7px;color:#1e1e1e;left:10.1px;">E-Core 8</div>
<div class="t" style="top:655.09px;font-size:10.7px;color:#2d50d0;left:-70.5px;width:400px;text-align:center;">41°C</div>
<div class="t" style="top:655.09px;font-size:10.7px;color:#8a4a10;left:-7.599999999999994px;width:400px;text-align:center;">34°C</div>
<div class="t" style="top:655.09px;font-size:10.7px;color:#8a4a10;left:55px;width:400px;text-align:center;">83°C</div>
<div class="t" style="top:655.09px;font-size:10.7px;color:#8a4a10;left:121.30000000000001px;width:400px;text-align:center;">40°C</div>
<div class="t" style="top:675.09px;font-size:10.7px;color:#1e1e1e;left:10.1px;">E-Core 9</div>
<div class="t" style="top:675.09px;font-size:10.7px;color:#2d50d0;left:-70.5px;width:400px;text-align:center;">41°C</div>
<div class="t" style="top:675.09px;font-size:10.7px;color:#8a4a10;left:-7.599999999999994px;width:400px;text-align:center;">34°C</div>
<div class="t" style="top:675.09px;font-size:10.7px;color:#8a4a10;left:55px;width:400px;text-align:center;">83°C</div>
<div class="t" style="top:675.09px;font-size:10.7px;color:#8a4a10;left:121.30000000000001px;width:400px;text-align:center;">40°C</div>
<div class="t" style="top:695.09px;font-size:10.7px;color:#1e1e1e;left:10.1px;">E-Core 10</div>
<div class="t" style="top:695.09px;font-size:10.7px;color:#2d50d0;left:-70.5px;width:400px;text-align:center;">41°C</div>
<div class="t" style="top:695.09px;font-size:10.7px;color:#8a4a10;left:-7.599999999999994px;width:400px;text-align:center;">34°C</div>
<div class="t" style="top:695.09px;font-size:10.7px;color:#8a4a10;left:55px;width:400px;text-align:center;">83°C</div>
<div class="t" style="top:695.09px;font-size:10.7px;color:#8a4a10;left:121.30000000000001px;width:400px;text-align:center;">40°C</div>
<div class="t" style="top:715.09px;font-size:10.7px;color:#1e1e1e;left:10.1px;">E-Core 11</div>
<div class="t" style="top:715.09px;font-size:10.7px;color:#2d50d0;left:-70.5px;width:400px;text-align:center;">41°C</div>
<div class="t" style="top:715.09px;font-size:10.7px;color:#8a4a10;left:-7.599999999999994px;width:400px;text-align:center;">36°C</div>
<div class="t" style="top:715.09px;font-size:10.7px;color:#8a4a10;left:55px;width:400px;text-align:center;">75°C</div>
<div class="t" style="top:715.09px;font-size:10.7px;color:#8a4a10;left:121.30000000000001px;width:400px;text-align:center;">41°C</div>
<div class="t" style="top:735.09px;font-size:10.7px;color:#1e1e1e;left:10.1px;">E-Core 12</div>
<div class="t" style="top:735.09px;font-size:10.7px;color:#2d50d0;left:-70.5px;width:400px;text-align:center;">41°C</div>
<div class="t" style="top:735.09px;font-size:10.7px;color:#8a4a10;left:-7.599999999999994px;width:400px;text-align:center;">36°C</div>
<div class="t" style="top:735.09px;font-size:10.7px;color:#8a4a10;left:55px;width:400px;text-align:center;">75°C</div>
<div class="t" style="top:735.09px;font-size:10.7px;color:#8a4a10;left:121.30000000000001px;width:400px;text-align:center;">41°C</div>
<div class="t" style="top:755.09px;font-size:10.7px;color:#1e1e1e;left:10.1px;">E-Core 13</div>
<div class="t" style="top:755.09px;font-size:10.7px;color:#2d50d0;left:-70.5px;width:400px;text-align:center;">41°C</div>
<div class="t" style="top:755.09px;font-size:10.7px;color:#8a4a10;left:-7.599999999999994px;width:400px;text-align:center;">36°C</div>
<div class="t" style="top:755.09px;font-size:10.7px;color:#8a4a10;left:55px;width:400px;text-align:center;">75°C</div>
<div class="t" style="top:755.09px;font-size:10.7px;color:#8a4a10;left:121.30000000000001px;width:400px;text-align:center;">41°C</div>
<div class="t" style="top:775.09px;font-size:10.7px;color:#1e1e1e;left:10.1px;">E-Core 14</div>
<div class="t" style="top:775.09px;font-size:10.7px;color:#2d50d0;left:-70.5px;width:400px;text-align:center;">41°C</div>
<div class="t" style="top:775.09px;font-size:10.7px;color:#8a4a10;left:-7.599999999999994px;width:400px;text-align:center;">36°C</div>
<div class="t" style="top:775.09px;font-size:10.7px;color:#8a4a10;left:55px;width:400px;text-align:center;">75°C</div>
<div class="t" style="top:775.09px;font-size:10.7px;color:#8a4a10;left:121.30000000000001px;width:400px;text-align:center;">41°C</div>
<div class="t" style="top:449.99px;font-size:10.7px;color:#6e6e6e;font-weight:bold;left:220px;width:400px;text-align:center;">Name</div>
<div class="t" style="top:449.99px;font-size:10.7px;color:#6e6e6e;font-weight:bold;left:297.6px;width:400px;text-align:center;">Current</div>
<div class="t" style="top:449.99px;font-size:10.7px;color:#6e6e6e;font-weight:bold;left:360.20000000000005px;width:400px;text-align:center;">Min</div>
<div class="t" style="top:449.99px;font-size:10.7px;color:#6e6e6e;font-weight:bold;left:423.70000000000005px;width:400px;text-align:center;">Max</div>
<div class="t" style="top:449.99px;font-size:10.7px;color:#6e6e6e;font-weight:bold;left:489px;width:400px;text-align:center;">Avg</div>
<svg style="left:381.5px;top:473px" width="9" height="6"><path d="M0.8 0.8 L4.5 4.5 L8.2 0.8" fill="none" stroke="#333" stroke-width="1.3"/></svg>
<svg style="left:406px;top:467.5px" width="16" height="15"><path d="M0.5 0 V14.5 H15.5" stroke="#d03030" fill="none" stroke-width="0.8"/><rect x="2" y="3" width="2.2" height="11.5" fill="#e04040"/><rect x="5" y="5" width="2.2" height="9.5" fill="#f0a030"/><rect x="8" y="7.5" width="2.2" height="7" fill="#3a8ad8"/><rect x="11" y="9" width="2.2" height="5.5" fill="#60b040"/></svg>
<div class="t" style="top:476.19px;font-size:10.7px;color:#777;font-weight:bold;left:428.4px;">Utilization</div>
<div style="position:absolute;left:465px;top:485px;width:1px;height:300px;background:#c8c8c8;"></div>
<div style="position:absolute;left:528px;top:485px;width:1px;height:300px;background:#c8c8c8;"></div>
<div style="position:absolute;left:591px;top:485px;width:1px;height:300px;background:#c8c8c8;"></div>
<div style="position:absolute;left:654px;top:485px;width:1px;height:300px;background:#c8c8c8;"></div>
<div class="t" style="top:495.09px;font-size:10.7px;color:#1e1e1e;left:376.7px;">CPU Total</div>
<div class="t" style="top:495.09px;font-size:10.7px;color:#2d50d0;left:297.3px;width:400px;text-align:center;">3.5%</div>
<div class="t" style="top:495.09px;font-size:10.7px;color:#8a4a10;left:359.79999999999995px;width:400px;text-align:center;">0.0%</div>
<div class="t" style="top:495.09px;font-size:10.7px;color:#8a4a10;left:423.20000000000005px;width:400px;text-align:center;">44.9%</div>
<div class="t" style="top:495.09px;font-size:10.7px;color:#8a4a10;left:488px;width:400px;text-align:center;">4.0%</div>
<div class="t" style="top:515.09px;font-size:10.7px;color:#1e1e1e;left:376.7px;">P-Core 1</div>
<div class="t" style="top:515.09px;font-size:10.7px;color:#2d50d0;left:297.3px;width:400px;text-align:center;">5.7%</div>
<div class="t" style="top:515.09px;font-size:10.7px;color:#8a4a10;left:359.79999999999995px;width:400px;text-align:center;">0.0%</div>
<div class="t" style="top:515.09px;font-size:10.7px;color:#8a4a10;left:423.20000000000005px;width:400px;text-align:center;">71.2%</div>
<div class="t" style="top:515.09px;font-size:10.7px;color:#8a4a10;left:488px;width:400px;text-align:center;">4.7%</div>
<div class="t" style="top:535.09px;font-size:10.7px;color:#1e1e1e;left:376.7px;">P-Core 2</div>
<div class="t" style="top:535.09px;font-size:10.7px;color:#2d50d0;left:297.3px;width:400px;text-align:center;">1.1%</div>
<div class="t" style="top:535.09px;font-size:10.7px;color:#8a4a10;left:359.79999999999995px;width:400px;text-align:center;">0.0%</div>
<div class="t" style="top:535.09px;font-size:10.7px;color:#8a4a10;left:423.20000000000005px;width:400px;text-align:center;">77.7%</div>
<div class="t" style="top:535.09px;font-size:10.7px;color:#8a4a10;left:488px;width:400px;text-align:center;">3.2%</div>
<div class="t" style="top:555.09px;font-size:10.7px;color:#1e1e1e;left:376.7px;">P-Core 3</div>
<div class="t" style="top:555.09px;font-size:10.7px;color:#2d50d0;left:297.3px;width:400px;text-align:center;">12.9%</div>
<div class="t" style="top:555.09px;font-size:10.7px;color:#8a4a10;left:359.79999999999995px;width:400px;text-align:center;">0.0%</div>
<div class="t" style="top:555.09px;font-size:10.7px;color:#8a4a10;left:423.20000000000005px;width:400px;text-align:center;">76.3%</div>
<div class="t" style="top:555.09px;font-size:10.7px;color:#8a4a10;left:488px;width:400px;text-align:center;">11.6%</div>
<div class="t" style="top:575.09px;font-size:10.7px;color:#1e1e1e;left:376.7px;">P-Core 4</div>
<div class="t" style="top:575.09px;font-size:10.7px;color:#2d50d0;left:297.3px;width:400px;text-align:center;">9.8%</div>
<div class="t" style="top:575.09px;font-size:10.7px;color:#8a4a10;left:359.79999999999995px;width:400px;text-align:center;">0.0%</div>
<div class="t" style="top:575.09px;font-size:10.7px;color:#8a4a10;left:423.20000000000005px;width:400px;text-align:center;">75.9%</div>
<div class="t" style="top:575.09px;font-size:10.7px;color:#8a4a10;left:488px;width:400px;text-align:center;">10.9%</div>
<div class="t" style="top:595.09px;font-size:10.7px;color:#1e1e1e;left:376.7px;">P-Core 5</div>
<div class="t" style="top:595.09px;font-size:10.7px;color:#2d50d0;left:297.3px;width:400px;text-align:center;">1.5%</div>
<div class="t" style="top:595.09px;font-size:10.7px;color:#8a4a10;left:359.79999999999995px;width:400px;text-align:center;">0.0%</div>
<div class="t" style="top:595.09px;font-size:10.7px;color:#8a4a10;left:423.20000000000005px;width:400px;text-align:center;">75.4%</div>
<div class="t" style="top:595.09px;font-size:10.7px;color:#8a4a10;left:488px;width:400px;text-align:center;">3.0%</div>
<div class="t" style="top:615.09px;font-size:10.7px;color:#1e1e1e;left:376.7px;">P-Core 6</div>
<div class="t" style="top:615.09px;font-size:10.7px;color:#2d50d0;left:297.3px;width:400px;text-align:center;">1.0%</div>
<div class="t" style="top:615.09px;font-size:10.7px;color:#8a4a10;left:359.79999999999995px;width:400px;text-align:center;">0.0%</div>
<div class="t" style="top:615.09px;font-size:10.7px;color:#8a4a10;left:423.20000000000005px;width:400px;text-align:center;">71.3%</div>
<div class="t" style="top:615.09px;font-size:10.7px;color:#8a4a10;left:488px;width:400px;text-align:center;">3.0%</div>
<div class="t" style="top:635.09px;font-size:10.7px;color:#1e1e1e;left:376.7px;">E-Core 7</div>
<div class="t" style="top:635.09px;font-size:10.7px;color:#2d50d0;left:297.3px;width:400px;text-align:center;">0.0%</div>
<div class="t" style="top:635.09px;font-size:10.7px;color:#8a4a10;left:359.79999999999995px;width:400px;text-align:center;">0.0%</div>
<div class="t" style="top:635.09px;font-size:10.7px;color:#8a4a10;left:423.20000000000005px;width:400px;text-align:center;">100.0%</div>
<div class="t" style="top:635.09px;font-size:10.7px;color:#8a4a10;left:488px;width:400px;text-align:center;">1.3%</div>
<div class="t" style="top:655.09px;font-size:10.7px;color:#1e1e1e;left:376.7px;">E-Core 8</div>
<div class="t" style="top:655.09px;font-size:10.7px;color:#2d50d0;left:297.3px;width:400px;text-align:center;">0.6%</div>
<div class="t" style="top:655.09px;font-size:10.7px;color:#8a4a10;left:359.79999999999995px;width:400px;text-align:center;">0.0%</div>
<div class="t" style="top:655.09px;font-size:10.7px;color:#8a4a10;left:423.20000000000005px;width:400px;text-align:center;">95.2%</div>
<div class="t" style="top:655.09px;font-size:10.7px;color:#8a4a10;left:488px;width:400px;text-align:center;">1.6%</div>
<div class="t" style="top:675.09px;font-size:10.7px;color:#1e1e1e;left:376.7px;">E-Core 9</div>
<div class="t" style="top:675.09px;font-size:10.7px;color:#2d50d0;left:297.3px;width:400px;text-align:center;">3.4%</div>
<div class="t" style="top:675.09px;font-size:10.7px;color:#8a4a10;left:359.79999999999995px;width:400px;text-align:center;">0.0%</div>
<div class="t" style="top:675.09px;font-size:10.7px;color:#8a4a10;left:423.20000000000005px;width:400px;text-align:center;">100.0%</div>
<div class="t" style="top:675.09px;font-size:10.7px;color:#8a4a10;left:488px;width:400px;text-align:center;">1.5%</div>
<div class="t" style="top:695.09px;font-size:10.7px;color:#1e1e1e;left:376.7px;">E-Core 10</div>
<div class="t" style="top:695.09px;font-size:10.7px;color:#2d50d0;left:297.3px;width:400px;text-align:center;">0.7%</div>
<div class="t" style="top:695.09px;font-size:10.7px;color:#8a4a10;left:359.79999999999995px;width:400px;text-align:center;">0.0%</div>
<div class="t" style="top:695.09px;font-size:10.7px;color:#8a4a10;left:423.20000000000005px;width:400px;text-align:center;">96.0%</div>
<div class="t" style="top:695.09px;font-size:10.7px;color:#8a4a10;left:488px;width:400px;text-align:center;">1.4%</div>
<div class="t" style="top:715.09px;font-size:10.7px;color:#1e1e1e;left:376.7px;">E-Core 11</div>
<div class="t" style="top:715.09px;font-size:10.7px;color:#2d50d0;left:297.3px;width:400px;text-align:center;">0.0%</div>
<div class="t" style="top:715.09px;font-size:10.7px;color:#8a4a10;left:359.79999999999995px;width:400px;text-align:center;">0.0%</div>
<div class="t" style="top:715.09px;font-size:10.7px;color:#8a4a10;left:423.20000000000005px;width:400px;text-align:center;">73.9%</div>
<div class="t" style="top:715.09px;font-size:10.7px;color:#8a4a10;left:488px;width:400px;text-align:center;">1.2%</div>
<div class="t" style="top:735.09px;font-size:10.7px;color:#1e1e1e;left:376.7px;">E-Core 12</div>
<div class="t" style="top:735.09px;font-size:10.7px;color:#2d50d0;left:297.3px;width:400px;text-align:center;">2.3%</div>
<div class="t" style="top:735.09px;font-size:10.7px;color:#8a4a10;left:359.79999999999995px;width:400px;text-align:center;">0.0%</div>
<div class="t" style="top:735.09px;font-size:10.7px;color:#8a4a10;left:423.20000000000005px;width:400px;text-align:center;">95.4%</div>
<div class="t" style="top:735.09px;font-size:10.7px;color:#8a4a10;left:488px;width:400px;text-align:center;">1.4%</div>
<div class="t" style="top:755.09px;font-size:10.7px;color:#1e1e1e;left:376.7px;">E-Core 13</div>
<div class="t" style="top:755.09px;font-size:10.7px;color:#2d50d0;left:297.3px;width:400px;text-align:center;">0.4%</div>
<div class="t" style="top:755.09px;font-size:10.7px;color:#8a4a10;left:359.79999999999995px;width:400px;text-align:center;">0.0%</div>
<div class="t" style="top:755.09px;font-size:10.7px;color:#8a4a10;left:423.20000000000005px;width:400px;text-align:center;">94.9%</div>
<div class="t" style="top:755.09px;font-size:10.7px;color:#8a4a10;left:488px;width:400px;text-align:center;">1.5%</div>
<div class="t" style="top:775.09px;font-size:10.7px;color:#1e1e1e;left:376.7px;">E-Core 14</div>
<div class="t" style="top:775.09px;font-size:10.7px;color:#2d50d0;left:297.3px;width:400px;text-align:center;">0.8%</div>
<div class="t" style="top:775.09px;font-size:10.7px;color:#8a4a10;left:359.79999999999995px;width:400px;text-align:center;">0.0%</div>
<div class="t" style="top:775.09px;font-size:10.7px;color:#8a4a10;left:423.20000000000005px;width:400px;text-align:center;">83.7%</div>
<div class="t" style="top:775.09px;font-size:10.7px;color:#8a4a10;left:488px;width:400px;text-align:center;">1.4%</div>
<div style="position:absolute;left:7px;top:796px;width:715px;height:1px;background:#d4d4d4;"></div>
<div class="t" style="top:814.08px;font-size:11.3px;color:#333;font-weight:bold;left:9px;">Core parking</div>
<div style="position:absolute;left:131px;top:815.8px;width:178.60000000000002px;height:1.2px;background:#4a6a9a;"></div>
<div style="position:absolute;left:307.1px;top:810.0px;width:5px;height:12.7px;background:#7a7a7a;"></div>
<div class="t" style="top:815.00px;font-size:12.1px;color:#1e1e1e;left:321.4px;">100%</div>
<div class="t" style="top:841.88px;font-size:11.3px;color:#333;font-weight:bold;left:9px;">Frequency scaling</div>
<div style="position:absolute;left:131px;top:843.9px;width:178.60000000000002px;height:1.2px;background:#4a6a9a;"></div>
<div style="position:absolute;left:307.1px;top:838.1px;width:5px;height:12.7px;background:#7a7a7a;"></div>
<div class="t" style="top:842.40px;font-size:12.1px;color:#1e1e1e;left:321.4px;">100%</div>
<div class="t" style="top:869.98px;font-size:11.3px;color:#333;font-weight:bold;left:9px;">Turbo boost</div>
<div style="position:absolute;left:131px;top:871.7px;width:116.5px;height:1.2px;background:#4a6a9a;"></div>
<div style="position:absolute;left:247.5px;top:871.7px;width:64.5px;height:1.2px;background:#a0a0a0;"></div>
<div style="position:absolute;left:245.0px;top:865.9000000000001px;width:5px;height:12.7px;background:#7a7a7a;"></div>
<div class="t" style="top:870.60px;font-size:12.1px;color:#1e1e1e;left:321.4px;">65%</div>
<div style="position:absolute;left:301.1px;top:854.9px;width:60.8px;height:35px;border:3px solid #fd3b3b;box-sizing:border-box;box-shadow:1px 2px 4px rgba(0,0,0,0.28), inset 1px 3px 4px rgba(0,0,0,0.22);"></div>
<div class="t" style="top:814.48px;font-size:11.3px;color:#333;font-weight:bold;left:368.1px;">P&amp;E Core policy</div>
<div style="position:absolute;left:490.3px;top:807px;width:216.2px;height:19.6px;border:1px solid #a8a8a8;box-sizing:border-box;background:#fff;"></div>
<div class="t" style="top:816.79px;font-size:10.7px;color:#1e1e1e;left:390.29999999999995px;width:400px;text-align:center;">Heterogeneous policy</div>
<svg style="left:696px;top:816px" width="6" height="3"><path d="M0 0 H6 L3 3 Z" fill="#444"/></svg>
<div class="t" style="top:840.08px;font-size:11.3px;color:#333;font-weight:bold;left:368.1px;">Performance</div>
<div style="position:absolute;left:490.3px;top:840.8px;width:46.19999999999999px;height:1.2px;background:#4a6a9a;"></div>
<div style="position:absolute;left:536.5px;top:840.8px;width:135.5px;height:1.2px;background:#a0a0a0;"></div>
<div style="position:absolute;left:534.0px;top:835.0px;width:5px;height:12.7px;background:#1e1e1e;"></div>
<div style="position:absolute;left:666px;top:828.3px;width:50px;height:26.5px;border:3px solid #fd3b3b;box-sizing:border-box;box-shadow:1px 2px 4px rgba(0,0,0,0.28), inset 1px 3px 4px rgba(0,0,0,0.22);"></div>
<div class="t" style="top:841.20px;font-size:12.1px;color:#1e1e1e;left:681px;">25%</div>
<div style="position:absolute;left:369.2px;top:862.4px;width:99.30000000000001px;height:23.200000000000045px;border:1px solid #adadad;box-sizing:border-box;background:#f0f0f0;"></div>
<div style="position:absolute;left:453px;top:863px;width:1px;height:22px;background:#adadad;"></div>
<svg style="left:373px;top:867px" width="14" height="14"><path d="M11.5 5 A5 5 0 0 0 2.5 4.5" fill="none" stroke="#3a8ad8" stroke-width="2"/><path d="M9 5.5 L13 5.8 L12.8 1.5 Z" fill="#3a8ad8"/><path d="M2.5 9 A5 5 0 0 0 11.5 9.5" fill="none" stroke="#3a8ad8" stroke-width="2"/><path d="M5 8.5 L1 8.2 L1.2 12.5 Z" fill="#3a8ad8"/></svg>
<div class="t" style="top:874.59px;font-size:11px;color:#1e1e1e;left:401.2px;">Refresh</div>
<svg style="left:458px;top:873px" width="6" height="3"><path d="M0 0 H6 L3 3 Z" fill="#555"/></svg>
<div style="position:absolute;left:515.2px;top:862.4px;width:94.69999999999993px;height:23.200000000000045px;border:1px solid #adadad;box-sizing:border-box;background:#f0f0f0;"></div>
<svg style="left:519px;top:867px" width="15" height="13"><path d="M1.2 6.5 L5 10.8 L13.8 1.5" fill="none" stroke="#2a9a3a" stroke-width="2.4"/></svg>
<div class="t" style="top:874.59px;font-size:11px;color:#1e1e1e;left:549px;">Apply</div>
<div style="position:absolute;left:621px;top:862.4px;width:94.70000000000005px;height:23.200000000000045px;border:1px solid #adadad;box-sizing:border-box;background:#f0f0f0;"></div>
<svg style="left:626px;top:867px" width="12" height="13"><path d="M1 1 L11 12 M11 1 L1 12" stroke="#e03030" stroke-width="1.8"/></svg>
<div class="t" style="top:874.59px;font-size:11px;color:#1e1e1e;left:654.8px;">Close</div>
<div style="position:absolute;left:727px;top:78px;width:467px;height:23px;background:#dcdcdc;border-bottom:1px solid #c4c4c4;box-sizing:border-box;"></div>
<div class="t" style="top:88.88px;font-size:11.3px;color:#111;font-weight:bold;left:733.2px;">Essential CPU Data</div>
<svg style="left:1138px;top:85px" width="9" height="9"><rect x="0.5" y="0.5" width="7" height="7" fill="none" stroke="#4a4a4a" stroke-width="1"/></svg>
<svg style="left:1157.5px;top:85px" width="9" height="10"><path d="M1.6 0.5 H6.6 M2.6 0.5 V3.2 L1 5.3 H7.6 L6 3.2 V0.5 M4.3 5.3 V9.2" fill="none" stroke="#4a4a4a" stroke-width="1"/></svg>
<svg style="left:1178px;top:85px" width="9" height="9"><path d="M0.3 0.3 L8.2 8.2 M8.2 0.3 L0.3 8.2" stroke="#4a4a4a" stroke-width="1"/></svg>
<div style="position:absolute;left:1194px;top:78px;width:1px;height:814px;background:#c8c8c8;"></div>
<div class="t" style="top:115.09px;font-size:13px;color:#707070;left:734.6px;">Cores Enabled: 20 - Cores Parked: 0</div>
<svg style="left:0;top:0" width="1732" height="914"><rect x="737.5" y="135.5" width="409" height="170" fill="#fff" stroke="#cbcbcb" stroke-width="1"/><line x1="759.5" y1="135" x2="759.5" y2="306" stroke="#cbcbcb" stroke-width="1"/><line x1="807.5" y1="135" x2="807.5" y2="306" stroke="#cbcbcb" stroke-width="1"/><line x1="854.5" y1="135" x2="854.5" y2="306" stroke="#cbcbcb" stroke-width="1"/><line x1="902.5" y1="135" x2="902.5" y2="306" stroke="#cbcbcb" stroke-width="1"/><line x1="950.5" y1="135" x2="950.5" y2="306" stroke="#cbcbcb" stroke-width="1"/><line x1="998.5" y1="135" x2="998.5" y2="306" stroke="#cbcbcb" stroke-width="1"/><line x1="1045.5" y1="135" x2="1045.5" y2="306" stroke="#cbcbcb" stroke-width="1"/><line x1="1093.5" y1="135" x2="1093.5" y2="306" stroke="#cbcbcb" stroke-width="1"/><line x1="1141.5" y1="135" x2="1141.5" y2="306" stroke="#cbcbcb" stroke-width="1"/><line x1="737" y1="142.5" x2="1152" y2="142.5" stroke="#cbcbcb" stroke-width="1"/><line x1="737" y1="196.5" x2="1152" y2="196.5" stroke="#cbcbcb" stroke-width="1"/><line x1="737" y1="251.5" x2="1152" y2="251.5" stroke="#cbcbcb" stroke-width="1"/><line x1="737" y1="304.5" x2="1152" y2="304.5" stroke="#cbcbcb" stroke-width="1"/><line x1="1147" y1="160.5" x2="1150" y2="160.5" stroke="#cbcbcb" stroke-width="1"/><line x1="1147" y1="178.5" x2="1150" y2="178.5" stroke="#cbcbcb" stroke-width="1"/><line x1="1147" y1="215.5" x2="1150" y2="215.5" stroke="#cbcbcb" stroke-width="1"/><line x1="1147" y1="233.5" x2="1150" y2="233.5" stroke="#cbcbcb" stroke-width="1"/><line x1="1147" y1="269.5" x2="1150" y2="269.5" stroke="#cbcbcb" stroke-width="1"/><line x1="1147" y1="287.5" x2="1150" y2="287.5" stroke="#cbcbcb" stroke-width="1"/><line x1="1146.5" y1="135" x2="1146.5" y2="306" stroke="#c0c0c0" stroke-width="1"/><svg x="737" y="135" width="410" height="171" style="position:static"><g transform="translate(-737,-135)"><polyline points="737.50,156.05 737.42,156.05 743.49,153.02 751.37,159.08 759.25,153.02 776.22,153.02 780.47,156.05 785.92,153.02 789.56,153.02 793.80,156.05 798.05,156.05 801.68,150.60 805.32,153.02 810.17,174.24 814.41,156.05 818.66,156.05 822.90,159.08 827.14,159.08 830.78,160.90 834.42,156.05 842.90,156.05 847.75,159.08 855.03,153.02 859.27,153.02 863.52,159.08 868.37,159.08 876.25,153.02 893.22,153.02 897.46,156.05 901.71,153.02 908.98,153.02 913.23,156.05 918.07,153.02 922.32,153.02 926.56,156.05 930.20,156.05 934.44,153.02 938.69,153.02 940.00,154.24 942.42,156.05 947.27,153.02 950.91,153.02 955.16,156.05 959.40,153.02 964.25,156.05 967.89,156.05 971.52,153.02 976.37,156.05 981.22,153.02 984.25,153.02 988.50,156.05 992.13,153.02 1000.62,153.02 1005.47,156.05 1010.32,153.02 1012.74,153.02 1017.59,156.05 1021.84,153.02 1026.69,156.05 1034.57,150.60 1038.81,153.02 1046.69,153.02 1050.33,150.60 1056.39,150.60 1061.24,159.08 1067.30,153.02 1071.55,153.02 1075.79,159.08 1080.64,153.02 1084.28,153.02 1090.34,157.27 1092.16,159.08 1096.40,174.24 1100.65,156.05 1104.89,156.05 1109.74,153.02 1113.38,156.05 1117.62,156.05 1125.50,150.60 1129.74,153.02 1134.59,153.02 1138.84,156.05 1142.47,153.02 1146.72,153.02" fill="none" stroke="#80a22a" stroke-width="1.05" stroke-linejoin="round"/></g><g transform="translate(-737,-135)"><polyline points="737.50,183.35 737.42,183.35 743.49,186.38 751.37,180.32 759.25,186.38 776.22,186.38 780.47,183.35 785.92,186.38 789.56,186.38 793.80,183.35 798.05,183.35 801.68,188.80 805.32,186.38 810.17,165.16 814.41,183.35 818.66,183.35 822.90,180.32 827.14,180.32 830.78,178.50 834.42,183.35 842.90,183.35 847.75,180.32 855.03,186.38 859.27,186.38 863.52,180.32 868.37,180.32 876.25,186.38 893.22,186.38 897.46,183.35 901.71,186.38 908.98,186.38 913.23,183.35 918.07,186.38 922.32,186.38 926.56,183.35 930.20,183.35 934.44,186.38 938.69,186.38 940.00,185.16 942.42,183.35 947.27,186.38 950.91,186.38 955.16,183.35 959.40,186.38 964.25,183.35 967.89,183.35 971.52,186.38 976.37,183.35 981.22,186.38 984.25,186.38 988.50,183.35 992.13,186.38 1000.62,186.38 1005.47,183.35 1010.32,186.38 1012.74,186.38 1017.59,183.35 1021.84,186.38 1026.69,183.35 1034.57,188.80 1038.81,186.38 1046.69,186.38 1050.33,188.80 1056.39,188.80 1061.24,180.32 1067.30,186.38 1071.55,186.38 1075.79,180.32 1080.64,186.38 1084.28,186.38 1090.34,182.13 1092.16,180.32 1096.40,165.16 1100.65,183.35 1104.89,183.35 1109.74,186.38 1113.38,183.35 1117.62,183.35 1125.50,188.80 1129.74,186.38 1134.59,186.38 1138.84,183.35 1142.47,186.38 1146.72,186.38" fill="none" stroke="#1670c8" stroke-width="1.05" stroke-linejoin="round"/></g></svg><rect x="740.5" y="254.5" width="138" height="47" fill="#fff" stroke="#c8c8c8" stroke-width="1"/><rect x="754.5" y="262.5" width="14" height="14" fill="#fff" stroke="#1670c8" stroke-width="1"/><path d="M757.8 269.6 L761.4 272.6 L765.6 267.2" fill="none" stroke="#1670c8" stroke-width="2.3" stroke-linejoin="round"/><rect x="754.5" y="280.5" width="14" height="14" fill="#fff" stroke="#80a22a" stroke-width="1"/><path d="M757.8 287.6 L761.4 290.6 L765.6 285.2" fill="none" stroke="#80a22a" stroke-width="2.3" stroke-linejoin="round"/></svg>
<div class="t" style="top:142.19px;font-size:10.7px;color:#222;left:1158px;">60°C</div>
<div class="t" style="top:196.99px;font-size:10.7px;color:#222;left:1158px;">40°C</div>
<div class="t" style="top:251.09px;font-size:10.7px;color:#222;left:1158px;">20°C</div>
<div class="t" style="top:304.89px;font-size:10.7px;color:#222;left:1158px;">0°C</div>
<div class="t" style="top:269.29px;font-size:10.7px;color:#222;left:775.7px;">CPU Temperature</div>
<div class="t" style="top:287.29px;font-size:10.7px;color:#222;left:775.7px;">Distance to Tj Max</div>
<svg style="left:0;top:0" width="1732" height="914"><rect x="737.5" y="318.5" width="409" height="170" fill="#fff" stroke="#cbcbcb" stroke-width="1"/><line x1="759.5" y1="318" x2="759.5" y2="489" stroke="#cbcbcb" stroke-width="1"/><line x1="807.5" y1="318" x2="807.5" y2="489" stroke="#cbcbcb" stroke-width="1"/><line x1="854.5" y1="318" x2="854.5" y2="489" stroke="#cbcbcb" stroke-width="1"/><line x1="902.5" y1="318" x2="902.5" y2="489" stroke="#cbcbcb" stroke-width="1"/><line x1="950.5" y1="318" x2="950.5" y2="489" stroke="#cbcbcb" stroke-width="1"/><line x1="998.5" y1="318" x2="998.5" y2="489" stroke="#cbcbcb" stroke-width="1"/><line x1="1045.5" y1="318" x2="1045.5" y2="489" stroke="#cbcbcb" stroke-width="1"/><line x1="1093.5" y1="318" x2="1093.5" y2="489" stroke="#cbcbcb" stroke-width="1"/><line x1="1141.5" y1="318" x2="1141.5" y2="489" stroke="#cbcbcb" stroke-width="1"/><line x1="737" y1="337.5" x2="1152" y2="337.5" stroke="#cbcbcb" stroke-width="1"/><line x1="737" y1="375.5" x2="1152" y2="375.5" stroke="#cbcbcb" stroke-width="1"/><line x1="737" y1="413.5" x2="1152" y2="413.5" stroke="#cbcbcb" stroke-width="1"/><line x1="737" y1="451.5" x2="1152" y2="451.5" stroke="#cbcbcb" stroke-width="1"/><line x1="737" y1="488.5" x2="1152" y2="488.5" stroke="#cbcbcb" stroke-width="1"/><line x1="1147" y1="324.5" x2="1150" y2="324.5" stroke="#cbcbcb" stroke-width="1"/><line x1="1147" y1="350.5" x2="1150" y2="350.5" stroke="#cbcbcb" stroke-width="1"/><line x1="1147" y1="362.5" x2="1150" y2="362.5" stroke="#cbcbcb" stroke-width="1"/><line x1="1147" y1="388.5" x2="1150" y2="388.5" stroke="#cbcbcb" stroke-width="1"/><line x1="1147" y1="400.5" x2="1150" y2="400.5" stroke="#cbcbcb" stroke-width="1"/><line x1="1147" y1="426.5" x2="1150" y2="426.5" stroke="#cbcbcb" stroke-width="1"/><line x1="1147" y1="438.5" x2="1150" y2="438.5" stroke="#cbcbcb" stroke-width="1"/><line x1="1147" y1="463.5" x2="1150" y2="463.5" stroke="#cbcbcb" stroke-width="1"/><line x1="1147" y1="476.5" x2="1150" y2="476.5" stroke="#cbcbcb" stroke-width="1"/><line x1="1146.5" y1="318" x2="1146.5" y2="489" stroke="#c0c0c0" stroke-width="1"/><svg x="737" y="318" width="410" height="171" style="position:static"><g transform="translate(-737,-318)"><polyline points="737.91,487.41 746.62,487.99 756.31,485.48 764.06,487.41 773.74,486.45 781.49,485.48 789.24,487.41 796.99,485.48 804.74,487.41 812.49,487.99 820.24,487.99 827.99,486.45 835.74,484.51 843.49,481.60 851.23,479.66 858.98,477.73 866.73,468.04 872.54,464.17 878.36,462.23 884.17,469.01 889.98,465.14 896.76,459.32 901.60,450.61 905.48,468.04 909.35,455.45 913.23,469.01 921.94,454.48 926.79,465.14 929.69,460.29 934.54,464.17 938.41,463.20 939.38,446.73 940.00,423.49 941.94,414.77 945.81,448.67 949.69,456.42 953.56,450.61 956.47,450.61 959.37,462.23 963.25,461.26 968.09,457.39 971.96,459.32 974.87,457.39 980.68,457.97 984.56,462.23 988.43,451.57 992.31,466.10 996.18,449.64 1001.02,458.36 1004.90,456.42 1009.74,462.23 1014.58,457.39 1017.49,437.05 1021.36,464.17 1026.21,459.32 1030.08,459.32 1034.54,450.61 1038.80,463.20 1044.61,460.29 1051.39,461.26 1056.23,468.04 1061.66,410.89 1067.86,463.20 1071.73,447.70 1075.61,448.67 1080.45,444.79 1084.32,458.36 1088.20,450.61 1093.04,438.98 1099.82,432.20 1104.66,438.98 1109.51,411.86 1112.41,440.92 1116.29,454.48 1121.13,450.61 1125.97,463.20 1129.85,453.51 1133.72,463.20 1138.57,446.73 1142.44,457.39 1145.93,450.61" fill="none" stroke="#c0a060" stroke-width="1.0" stroke-linejoin="round"/></g><g transform="translate(-737,-318)"><polyline points="737.91,413.80 739.26,406.05 742.75,411.86 746.62,411.86 748.17,409.92 751.47,373.12 756.31,396.36 760.18,398.30 764.06,409.92 768.90,405.08 772.39,378.93 776.65,394.43 780.52,394.43 789.24,389.58 793.12,392.49 797.38,385.71 805.71,392.49 810.55,387.65 813.46,435.11 816.36,487.41 820.24,487.41 821.59,435.11 822.76,391.52 824.69,435.11 826.05,487.41 833.80,485.48 839.61,486.45 843.49,487.41 851.23,485.48 858.98,479.66 862.86,483.54 868.67,475.79 872.54,487.41 876.42,487.41 879.32,480.63 884.17,482.57 888.04,481.21 891.92,483.15 896.76,480.63 901.60,478.70 905.09,487.41 909.35,459.32 913.23,487.41 918.07,478.70 925.82,475.79 930.66,483.54 934.54,477.73 938.41,483.54 939.96,424.45 940.00,447.70 941.55,400.24 942.71,387.65 947.36,400.24 948.72,411.86 950.65,477.73 951.62,469.98 953.56,462.23 957.05,423.49 958.40,376.99 959.76,366.34 960.92,402.18 962.86,448.67 967.12,481.60 971.96,476.76 976.81,472.88 980.68,487.41 984.56,479.66 988.43,485.48 992.31,477.73 998.12,482.57 1001.99,483.54 1005.87,481.60 1009.74,478.70 1011.68,448.67 1013.61,426.39 1017.49,431.23 1019.43,454.48 1021.36,468.04 1025.24,470.95 1030.08,486.45 1034.54,464.17 1038.80,484.51 1042.67,480.63 1046.55,480.63 1051.39,475.79 1056.23,476.76 1062.05,484.51 1067.86,477.73 1075.61,481.60 1077.54,427.36 1079.48,347.93 1081.03,333.40 1082.00,373.12 1084.32,429.30 1087.23,378.93 1089.17,363.43 1092.07,352.78 1095.95,350.84 1097.88,373.12 1100.79,448.67 1103.70,469.98 1104.66,474.82 1106.21,409.92 1108.54,356.65 1109.70,344.06 1110.48,373.12 1112.41,425.42 1113.38,448.67 1117.26,474.82 1122.10,476.76 1129.85,484.51 1133.72,474.82 1137.60,479.66 1142.44,469.01 1145.93,477.73" fill="none" stroke="#c55ab0" stroke-width="1.0" stroke-linejoin="round"/></g></svg><rect x="740.5" y="437.5" width="137" height="47" fill="#fff" stroke="#c8c8c8" stroke-width="1"/><rect x="754.5" y="445.5" width="14" height="14" fill="#fff" stroke="#b89a58" stroke-width="1"/><path d="M757.8 452.6 L761.4 455.6 L765.6 450.2" fill="none" stroke="#b89a58" stroke-width="2.3" stroke-linejoin="round"/><rect x="754.5" y="463.5" width="14" height="14" fill="#fff" stroke="#c55ab0" stroke-width="1"/><path d="M757.8 470.6 L761.4 473.6 L765.6 468.2" fill="none" stroke="#c55ab0" stroke-width="2.3" stroke-linejoin="round"/></svg>
<div class="t" style="top:337.39px;font-size:10.7px;color:#222;left:1158px;">20%</div>
<div class="t" style="top:375.49px;font-size:10.7px;color:#222;left:1158px;">15%</div>
<div class="t" style="top:413.49px;font-size:10.7px;color:#222;left:1158px;">10%</div>
<div class="t" style="top:451.29px;font-size:10.7px;color:#222;left:1158px;">5%</div>
<div class="t" style="top:488.09px;font-size:10.7px;color:#222;left:1158px;">0%</div>
<div class="t" style="top:451.69px;font-size:10.7px;color:#222;left:775.7px;">Utilization P-Cores</div>
<div class="t" style="top:470.29px;font-size:10.7px;color:#222;left:775.7px;">Utilization E-Cores</div>
<svg style="left:0;top:0" width="1732" height="914"><rect x="737.5" y="501.5" width="409" height="169" fill="#fff" stroke="#cbcbcb" stroke-width="1"/><line x1="759.5" y1="501" x2="759.5" y2="671" stroke="#cbcbcb" stroke-width="1"/><line x1="807.5" y1="501" x2="807.5" y2="671" stroke="#cbcbcb" stroke-width="1"/><line x1="854.5" y1="501" x2="854.5" y2="671" stroke="#cbcbcb" stroke-width="1"/><line x1="902.5" y1="501" x2="902.5" y2="671" stroke="#cbcbcb" stroke-width="1"/><line x1="950.5" y1="501" x2="950.5" y2="671" stroke="#cbcbcb" stroke-width="1"/><line x1="998.5" y1="501" x2="998.5" y2="671" stroke="#cbcbcb" stroke-width="1"/><line x1="1045.5" y1="501" x2="1045.5" y2="671" stroke="#cbcbcb" stroke-width="1"/><line x1="1093.5" y1="501" x2="1093.5" y2="671" stroke="#cbcbcb" stroke-width="1"/><line x1="1141.5" y1="501" x2="1141.5" y2="671" stroke="#cbcbcb" stroke-width="1"/><line x1="737" y1="506.5" x2="1152" y2="506.5" stroke="#cbcbcb" stroke-width="1"/><line x1="737" y1="547.5" x2="1152" y2="547.5" stroke="#cbcbcb" stroke-width="1"/><line x1="737" y1="588.5" x2="1152" y2="588.5" stroke="#cbcbcb" stroke-width="1"/><line x1="737" y1="629.5" x2="1152" y2="629.5" stroke="#cbcbcb" stroke-width="1"/><line x1="737" y1="670.5" x2="1152" y2="670.5" stroke="#cbcbcb" stroke-width="1"/><line x1="1147" y1="520.5" x2="1150" y2="520.5" stroke="#cbcbcb" stroke-width="1"/><line x1="1147" y1="533.5" x2="1150" y2="533.5" stroke="#cbcbcb" stroke-width="1"/><line x1="1147" y1="561.5" x2="1150" y2="561.5" stroke="#cbcbcb" stroke-width="1"/><line x1="1147" y1="574.5" x2="1150" y2="574.5" stroke="#cbcbcb" stroke-width="1"/><line x1="1147" y1="602.5" x2="1150" y2="602.5" stroke="#cbcbcb" stroke-width="1"/><line x1="1147" y1="615.5" x2="1150" y2="615.5" stroke="#cbcbcb" stroke-width="1"/><line x1="1147" y1="643.5" x2="1150" y2="643.5" stroke="#cbcbcb" stroke-width="1"/><line x1="1147" y1="656.5" x2="1150" y2="656.5" stroke="#cbcbcb" stroke-width="1"/><line x1="1146.5" y1="501" x2="1146.5" y2="671" stroke="#c0c0c0" stroke-width="1"/><svg x="737" y="501" width="410" height="170" style="position:static"><g transform="translate(-737,-501)"><polyline points="737.86,580.35 742.62,580.35 747.38,570.45 751.18,567.02 756.90,580.35 768.32,580.35 772.13,563.79 775.94,577.11 780.70,572.35 785.46,558.64 790.22,578.07 795.93,571.40 800.69,569.50 805.45,579.97 807.35,560.93 810.59,516.18 814.02,579.97 818.40,527.61 822.59,579.97 881.61,580.35 885.42,578.07 888.27,580.35 913.98,580.35 918.17,593.30 922.55,580.35 940.00,580.35 1000.93,580.35 1005.69,593.30 1010.45,580.35 1014.26,579.02 1016.16,580.35 1073.28,580.35 1080.90,577.11 1088.51,580.35 1093.85,577.11 1100.89,580.35 1107.56,579.02 1112.32,580.35 1146.21,580.35" fill="none" stroke="#80aa48" stroke-width="1.05" stroke-linejoin="round"/></g><g transform="translate(-737,-501)"><polyline points="737.86,601.29 748.33,601.29 753.09,599.96 755.94,601.29 759.75,598.63 765.46,601.29 768.32,601.29 774.98,589.49 780.70,583.78 784.50,582.25 789.27,585.68 794.03,599.01 800.69,597.11 805.45,593.30 810.21,581.87 814.59,600.91 818.78,547.60 822.59,591.39 826.39,601.29 841.63,601.29 844.48,599.96 847.34,601.29 898.75,601.29 902.56,599.96 905.41,601.29 917.79,599.01 923.50,601.29 933.02,601.29 939.68,596.15 940.00,596.73 942.28,595.58 947.62,601.29 950.47,601.29 955.61,597.49 959.99,601.29 1009.50,601.29 1013.31,586.63 1017.68,601.29 1080.90,601.29 1089.47,595.20 1093.27,597.49 1096.13,595.58 1100.89,601.29 1104.70,601.29 1109.46,591.39 1113.65,601.29 1146.21,601.29" fill="none" stroke="#80c0ee" stroke-width="1.05" stroke-linejoin="round"/></g></svg><rect x="740.5" y="619.5" width="115" height="47" fill="#fff" stroke="#c8c8c8" stroke-width="1"/><rect x="754.5" y="627.5" width="14" height="14" fill="#fff" stroke="#80aa48" stroke-width="1"/><path d="M757.8 634.6 L761.4 637.6 L765.6 632.2" fill="none" stroke="#80aa48" stroke-width="2.3" stroke-linejoin="round"/><rect x="754.5" y="645.5" width="14" height="14" fill="#fff" stroke="#80c0ee" stroke-width="1"/><path d="M757.8 652.6 L761.4 655.6 L765.6 650.2" fill="none" stroke="#80c0ee" stroke-width="2.3" stroke-linejoin="round"/></svg>
<div class="t" style="top:506.79px;font-size:10.7px;color:#222;left:1158px;">4 GHz</div>
<div class="t" style="top:547.29px;font-size:10.7px;color:#222;left:1158px;">3 GHz</div>
<div class="t" style="top:588.59px;font-size:10.7px;color:#222;left:1158px;">2 GHz</div>
<div class="t" style="top:629.59px;font-size:10.7px;color:#222;left:1158px;">1 GHz</div>
<div class="t" style="top:670.09px;font-size:10.7px;color:#222;left:1158px;">0 GHz</div>
<div class="t" style="top:633.79px;font-size:10.7px;color:#222;left:775.7px;">Clock P-Cores</div>
<div class="t" style="top:652.19px;font-size:10.7px;color:#222;left:775.7px;">Clock E-Cores</div>
<svg style="left:0;top:0" width="1732" height="914"><rect x="737.5" y="683.5" width="409" height="129" fill="#fff" stroke="#cbcbcb" stroke-width="1"/><line x1="759.5" y1="683" x2="759.5" y2="813" stroke="#cbcbcb" stroke-width="1"/><line x1="807.5" y1="683" x2="807.5" y2="813" stroke="#cbcbcb" stroke-width="1"/><line x1="854.5" y1="683" x2="854.5" y2="813" stroke="#cbcbcb" stroke-width="1"/><line x1="902.5" y1="683" x2="902.5" y2="813" stroke="#cbcbcb" stroke-width="1"/><line x1="950.5" y1="683" x2="950.5" y2="813" stroke="#cbcbcb" stroke-width="1"/><line x1="998.5" y1="683" x2="998.5" y2="813" stroke="#cbcbcb" stroke-width="1"/><line x1="1045.5" y1="683" x2="1045.5" y2="813" stroke="#cbcbcb" stroke-width="1"/><line x1="1093.5" y1="683" x2="1093.5" y2="813" stroke="#cbcbcb" stroke-width="1"/><line x1="1141.5" y1="683" x2="1141.5" y2="813" stroke="#cbcbcb" stroke-width="1"/><line x1="737" y1="715.5" x2="1152" y2="715.5" stroke="#cbcbcb" stroke-width="1"/><line x1="737" y1="747.5" x2="1152" y2="747.5" stroke="#cbcbcb" stroke-width="1"/><line x1="737" y1="780.5" x2="1152" y2="780.5" stroke="#cbcbcb" stroke-width="1"/><line x1="737" y1="812.5" x2="1152" y2="812.5" stroke="#cbcbcb" stroke-width="1"/><line x1="1147" y1="693.5" x2="1150" y2="693.5" stroke="#cbcbcb" stroke-width="1"/><line x1="1147" y1="704.5" x2="1150" y2="704.5" stroke="#cbcbcb" stroke-width="1"/><line x1="1147" y1="726.5" x2="1150" y2="726.5" stroke="#cbcbcb" stroke-width="1"/><line x1="1147" y1="737.5" x2="1150" y2="737.5" stroke="#cbcbcb" stroke-width="1"/><line x1="1147" y1="758.5" x2="1150" y2="758.5" stroke="#cbcbcb" stroke-width="1"/><line x1="1147" y1="769.5" x2="1150" y2="769.5" stroke="#cbcbcb" stroke-width="1"/><line x1="1147" y1="790.5" x2="1150" y2="790.5" stroke="#cbcbcb" stroke-width="1"/><line x1="1147" y1="801.5" x2="1150" y2="801.5" stroke="#cbcbcb" stroke-width="1"/><line x1="1146.5" y1="683" x2="1146.5" y2="813" stroke="#c0c0c0" stroke-width="1"/><svg x="737" y="683" width="410" height="130" style="position:static"><g transform="translate(-737,-683)"><polyline points="737.46,778.44 743.20,778.44 747.31,774.34 751.41,760.39 755.51,774.34 757.97,776.80 762.07,779.26 769.45,779.26 772.74,771.06 776.84,773.52 780.94,771.06 785.04,772.21 789.14,770.24 793.24,775.16 797.35,769.91 801.45,767.28 805.55,778.44 806.70,753.83 808.01,735.78 809.65,704.61 810.47,694.77 811.78,721.02 812.93,743.99 814.57,773.52 818.68,739.06 822.78,747.27 828.52,778.44 833.44,785.00 839.18,778.44 844.93,778.44 848.21,779.26 853.13,779.26 855.59,777.62 859.69,775.98 863.79,764.50 867.90,770.24 872.00,773.52 876.10,783.36 881.02,777.13 884.30,778.44 888.40,782.54 893.33,774.34 899.89,774.67 905.63,779.26 908.91,780.08 917.94,768.60 930.24,782.54 934.34,772.70 938.45,775.16 940.00,762.03 942.46,740.38 944.92,755.47 950.66,778.44 955.26,762.03 958.87,769.91 962.97,771.88 967.07,778.44 971.67,782.54 976.10,773.19 980.20,780.41 984.30,779.26 987.58,779.75 992.50,782.54 996.60,775.16 1000.71,775.98 1003.99,777.13 1009.73,783.36 1013.50,761.21 1017.11,769.42 1021.54,781.39 1025.32,779.26 1030.24,777.62 1035.16,781.72 1038.44,782.54 1042.54,778.44 1045.82,782.54 1049.93,781.72 1056.49,784.18 1061.41,753.01 1067.15,779.26 1072.08,774.34 1075.36,767.78 1080.28,765.32 1084.38,760.39 1088.48,758.75 1092.58,756.29 1096.19,742.35 1100.79,763.68 1104.89,754.65 1109.48,740.71 1113.09,771.06 1116.37,772.70 1122.12,778.44 1126.22,780.41 1129.50,779.26 1133.60,778.11 1138.52,778.11 1141.80,772.70 1145.91,772.37" fill="none" stroke="#2a86d8" stroke-width="1.05" stroke-linejoin="round"/></g></svg><rect x="740.5" y="779.5" width="102" height="29" fill="#fff" stroke="#c8c8c8" stroke-width="1"/><rect x="754.5" y="787.5" width="14" height="14" fill="#fff" stroke="#2a86d8" stroke-width="1"/><path d="M757.8 794.6 L761.4 797.6 L765.6 792.2" fill="none" stroke="#2a86d8" stroke-width="2.3" stroke-linejoin="round"/></svg>
<div class="t" style="top:715.39px;font-size:10.7px;color:#222;left:1158px;">9 W</div>
<div class="t" style="top:747.39px;font-size:10.7px;color:#222;left:1158px;">6 W</div>
<div class="t" style="top:780.19px;font-size:10.7px;color:#222;left:1158px;">3 W</div>
<div class="t" style="top:812.09px;font-size:10.7px;color:#222;left:1158px;">0 W</div>
<div class="t" style="top:794.19px;font-size:10.7px;color:#222;left:775.7px;">CPU Power</div>
<svg style="left:0;top:0" width="1732" height="914"><rect x="737.5" y="812.5" width="409" height="10" fill="#fff" stroke="#a8a8a8"/><rect x="1118" y="814.2" width="19" height="6.6" fill="#9a9a9a"/><rect x="1125" y="816" width="1" height="3.2" fill="#fff"/><rect x="1127" y="816" width="1" height="3.2" fill="#fff"/><rect x="1129" y="816" width="1" height="3.2" fill="#fff"/><path d="M744 815 L741 817.5 L744 820" fill="none" stroke="#888" stroke-width="1"/><path d="M1140.3 815 L1143.6 817.6 L1140.3 820.2" fill="none" stroke="#777" stroke-width="1.2"/><line x1="740.5" y1="822.5" x2="740.5" y2="825.5" stroke="#b0b0b0" stroke-width="1"/><line x1="749.5" y1="822.5" x2="749.5" y2="825.5" stroke="#b0b0b0" stroke-width="1"/><line x1="759.5" y1="822.5" x2="759.5" y2="828" stroke="#b0b0b0" stroke-width="1"/><line x1="769.5" y1="822.5" x2="769.5" y2="825.5" stroke="#b0b0b0" stroke-width="1"/><line x1="778.5" y1="822.5" x2="778.5" y2="825.5" stroke="#b0b0b0" stroke-width="1"/><line x1="788.5" y1="822.5" x2="788.5" y2="825.5" stroke="#b0b0b0" stroke-width="1"/><line x1="797.5" y1="822.5" x2="797.5" y2="825.5" stroke="#b0b0b0" stroke-width="1"/><line x1="807.5" y1="822.5" x2="807.5" y2="828" stroke="#b0b0b0" stroke-width="1"/><line x1="816.5" y1="822.5" x2="816.5" y2="825.5" stroke="#b0b0b0" stroke-width="1"/><line x1="826.5" y1="822.5" x2="826.5" y2="825.5" stroke="#b0b0b0" stroke-width="1"/><line x1="835.5" y1="822.5" x2="835.5" y2="825.5" stroke="#b0b0b0" stroke-width="1"/><line x1="845.5" y1="822.5" x2="845.5" y2="825.5" stroke="#b0b0b0" stroke-width="1"/><line x1="854.5" y1="822.5" x2="854.5" y2="828" stroke="#b0b0b0" stroke-width="1"/><line x1="864.5" y1="822.5" x2="864.5" y2="825.5" stroke="#b0b0b0" stroke-width="1"/><line x1="874.5" y1="822.5" x2="874.5" y2="825.5" stroke="#b0b0b0" stroke-width="1"/><line x1="883.5" y1="822.5" x2="883.5" y2="825.5" stroke="#b0b0b0" stroke-width="1"/><line x1="893.5" y1="822.5" x2="893.5" y2="825.5" stroke="#b0b0b0" stroke-width="1"/><line x1="902.5" y1="822.5" x2="902.5" y2="828" stroke="#b0b0b0" stroke-width="1"/><line x1="912.5" y1="822.5" x2="912.5" y2="825.5" stroke="#b0b0b0" stroke-width="1"/><line x1="921.5" y1="822.5" x2="921.5" y2="825.5" stroke="#b0b0b0" stroke-width="1"/><line x1="931.5" y1="822.5" x2="931.5" y2="825.5" stroke="#b0b0b0" stroke-width="1"/><line x1="940.5" y1="822.5" x2="940.5" y2="825.5" stroke="#b0b0b0" stroke-width="1"/><line x1="950.5" y1="822.5" x2="950.5" y2="828" stroke="#b0b0b0" stroke-width="1"/><line x1="959.5" y1="822.5" x2="959.5" y2="825.5" stroke="#b0b0b0" stroke-width="1"/><line x1="969.5" y1="822.5" x2="969.5" y2="825.5" stroke="#b0b0b0" stroke-width="1"/><line x1="979.5" y1="822.5" x2="979.5" y2="825.5" stroke="#b0b0b0" stroke-width="1"/><line x1="988.5" y1="822.5" x2="988.5" y2="825.5" stroke="#b0b0b0" stroke-width="1"/><line x1="998.5" y1="822.5" x2="998.5" y2="828" stroke="#b0b0b0" stroke-width="1"/><line x1="1007.5" y1="822.5" x2="1007.5" y2="825.5" stroke="#b0b0b0" stroke-width="1"/><line x1="1017.5" y1="822.5" x2="1017.5" y2="825.5" stroke="#b0b0b0" stroke-width="1"/><line x1="1026.5" y1="822.5" x2="1026.5" y2="825.5" stroke="#b0b0b0" stroke-width="1"/><line x1="1036.5" y1="822.5" x2="1036.5" y2="825.5" stroke="#b0b0b0" stroke-width="1"/><line x1="1045.5" y1="822.5" x2="1045.5" y2="828" stroke="#b0b0b0" stroke-width="1"/><line x1="1055.5" y1="822.5" x2="1055.5" y2="825.5" stroke="#b0b0b0" stroke-width="1"/><line x1="1065.5" y1="822.5" x2="1065.5" y2="825.5" stroke="#b0b0b0" stroke-width="1"/><line x1="1074.5" y1="822.5" x2="1074.5" y2="825.5" stroke="#b0b0b0" stroke-width="1"/><line x1="1084.5" y1="822.5" x2="1084.5" y2="825.5" stroke="#b0b0b0" stroke-width="1"/><line x1="1093.5" y1="822.5" x2="1093.5" y2="828" stroke="#b0b0b0" stroke-width="1"/><line x1="1103.5" y1="822.5" x2="1103.5" y2="825.5" stroke="#b0b0b0" stroke-width="1"/><line x1="1112.5" y1="822.5" x2="1112.5" y2="825.5" stroke="#b0b0b0" stroke-width="1"/><line x1="1122.5" y1="822.5" x2="1122.5" y2="825.5" stroke="#b0b0b0" stroke-width="1"/><line x1="1131.5" y1="822.5" x2="1131.5" y2="825.5" stroke="#b0b0b0" stroke-width="1"/><line x1="1141.5" y1="822.5" x2="1141.5" y2="828" stroke="#b0b0b0" stroke-width="1"/></svg>
<div class="t" style="top:837.79px;font-size:10.7px;color:#222;letter-spacing:0.15px;left:734.6px;">10:41:53 AM</div>
<div class="t" style="top:837.79px;font-size:10.7px;color:#222;letter-spacing:0.15px;left:823.7px;">10:42:07 AM</div>
<div class="t" style="top:837.79px;font-size:10.7px;color:#222;letter-spacing:0.15px;left:919.7px;">10:42:21 AM</div>
<div class="t" style="top:837.79px;font-size:10.7px;color:#222;letter-spacing:0.15px;left:1015px;">10:42:35 AM</div>
<div class="t" style="top:837.79px;font-size:10.7px;color:#222;letter-spacing:0.15px;left:1111px;">10:42:49 AM</div>
<div class="t" style="top:852.89px;font-size:10.7px;color:#222;letter-spacing:0.15px;left:776.6px;">10:42:00 AM</div>
<div class="t" style="top:852.89px;font-size:10.7px;color:#222;letter-spacing:0.15px;left:871.7px;">10:42:14 AM</div>
<div class="t" style="top:852.89px;font-size:10.7px;color:#222;letter-spacing:0.15px;left:967.7px;">10:42:28 AM</div>
<div class="t" style="top:852.89px;font-size:10.7px;color:#222;letter-spacing:0.15px;left:1062.9px;">10:42:42 AM</div>
<div style="position:absolute;left:727px;top:865.8px;width:467px;height:26px;background:#dadada;"></div>
<div style="position:absolute;left:729px;top:867px;width:110px;height:23px;background:#f0f0f0;border:1px solid #c4c4c4;border-top:none;box-sizing:border-box;"></div>
<div style="position:absolute;left:839.5px;top:867px;width:120px;height:21px;background:#e8e8e8;border:1px solid #c8c8c8;border-top:none;box-sizing:border-box;"></div>
<div class="t" style="top:877.59px;font-size:10.7px;color:#222;left:740px;">Essential CPU Data</div>
<div class="t" style="top:876.79px;font-size:10.7px;color:#222;left:849px;">CPU Data Distribution</div>
<div style="position:absolute;left:1195px;top:78px;width:537px;height:23px;background:#dcdcdc;border-bottom:1px solid #c4c4c4;box-sizing:border-box;"></div>
<div class="t" style="top:88.68px;font-size:11.3px;color:#111;font-weight:bold;left:1199.9px;">CPU Core Parking</div>
<svg style="left:1674px;top:85px" width="9" height="9"><rect x="0.5" y="0.5" width="7" height="7" fill="none" stroke="#4a4a4a" stroke-width="1"/></svg>
<svg style="left:1693.5px;top:85px" width="9" height="10"><path d="M1.6 0.5 H6.6 M2.6 0.5 V3.2 L1 5.3 H7.6 L6 3.2 V0.5 M4.3 5.3 V9.2" fill="none" stroke="#4a4a4a" stroke-width="1"/></svg>
<svg style="left:1714px;top:85px" width="9" height="9"><path d="M0.3 0.3 L8.2 8.2 M8.2 0.3 L0.3 8.2" stroke="#4a4a4a" stroke-width="1"/></svg>
<div style="position:absolute;left:1195px;top:101px;width:537px;height:791px;background:#f0f0f0;"></div>
<div style="position:absolute;left:1198px;top:103.5px;width:529px;height:299.4px;background:#fff;"></div>
<div class="t" style="top:117.39px;font-size:13px;color:#707070;left:1205.4px;">Cores Enabled: 100% - Cores Parked: 0%</div>
<svg style="left:0;top:0" width="1732" height="914"><rect x="1208.5" y="138.5" width="472" height="211" fill="#fff" stroke="#cbcbcb"/><line x1="1241.5" y1="138" x2="1241.5" y2="350" stroke="#cbcbcb"/><line x1="1288.5" y1="138" x2="1288.5" y2="350" stroke="#cbcbcb"/><line x1="1336.5" y1="138" x2="1336.5" y2="350" stroke="#cbcbcb"/><line x1="1383.5" y1="138" x2="1383.5" y2="350" stroke="#cbcbcb"/><line x1="1430.5" y1="138" x2="1430.5" y2="350" stroke="#cbcbcb"/><line x1="1477.5" y1="138" x2="1477.5" y2="350" stroke="#cbcbcb"/><line x1="1524.5" y1="138" x2="1524.5" y2="350" stroke="#cbcbcb"/><line x1="1572.5" y1="138" x2="1572.5" y2="350" stroke="#cbcbcb"/><line x1="1619.5" y1="138" x2="1619.5" y2="350" stroke="#cbcbcb"/><line x1="1666.5" y1="138" x2="1666.5" y2="350" stroke="#cbcbcb"/><line x1="1208" y1="157.5" x2="1686" y2="157.5" stroke="#cbcbcb"/><line x1="1208" y1="196.5" x2="1686" y2="196.5" stroke="#cbcbcb"/><line x1="1208" y1="234.5" x2="1686" y2="234.5" stroke="#cbcbcb"/><line x1="1208" y1="272.5" x2="1686" y2="272.5" stroke="#cbcbcb"/><line x1="1208" y1="310.5" x2="1686" y2="310.5" stroke="#cbcbcb"/><line x1="1208" y1="349.5" x2="1686" y2="349.5" stroke="#cbcbcb"/><line x1="1681" y1="170.5" x2="1684" y2="170.5" stroke="#cbcbcb"/><line x1="1681" y1="183.5" x2="1684" y2="183.5" stroke="#cbcbcb"/><line x1="1681" y1="208.5" x2="1684" y2="208.5" stroke="#cbcbcb"/><line x1="1681" y1="221.5" x2="1684" y2="221.5" stroke="#cbcbcb"/><line x1="1681" y1="246.5" x2="1684" y2="246.5" stroke="#cbcbcb"/><line x1="1681" y1="259.5" x2="1684" y2="259.5" stroke="#cbcbcb"/><line x1="1681" y1="284.5" x2="1684" y2="284.5" stroke="#cbcbcb"/><line x1="1681" y1="297.5" x2="1684" y2="297.5" stroke="#cbcbcb"/><line x1="1681" y1="323.5" x2="1684" y2="323.5" stroke="#cbcbcb"/><line x1="1681" y1="336.5" x2="1684" y2="336.5" stroke="#cbcbcb"/><line x1="1681" y1="144" x2="1684" y2="144" stroke="#cbcbcb"/><line x1="1208" y1="157.5" x2="1680" y2="157.5" stroke="#1a6ac0" stroke-width="1.1"/><rect x="1208.5" y="349.5" width="472" height="9.5" fill="#fff" stroke="#a8a8a8"/><rect x="1648" y="351.3" width="22.8" height="6.2" fill="#9a9a9a"/><rect x="1657" y="353" width="1" height="3" fill="#fff"/><rect x="1659" y="353" width="1" height="3" fill="#fff"/><rect x="1661" y="353" width="1" height="3" fill="#fff"/><path d="M1214.5 352 L1211.5 354.3 L1214.5 356.6" fill="none" stroke="#888"/><path d="M1674 352 L1677 354.3 L1674 356.6" fill="none" stroke="#888"/><line x1="1212.5" y1="359" x2="1212.5" y2="362" stroke="#b0b0b0"/><line x1="1222.5" y1="359" x2="1222.5" y2="362" stroke="#b0b0b0"/><line x1="1231.5" y1="359" x2="1231.5" y2="362" stroke="#b0b0b0"/><line x1="1250.5" y1="359" x2="1250.5" y2="362" stroke="#b0b0b0"/><line x1="1260.5" y1="359" x2="1260.5" y2="362" stroke="#b0b0b0"/><line x1="1269.5" y1="359" x2="1269.5" y2="362" stroke="#b0b0b0"/><line x1="1279.5" y1="359" x2="1279.5" y2="362" stroke="#b0b0b0"/><line x1="1297.5" y1="359" x2="1297.5" y2="362" stroke="#b0b0b0"/><line x1="1307.5" y1="359" x2="1307.5" y2="362" stroke="#b0b0b0"/><line x1="1316.5" y1="359" x2="1316.5" y2="362" stroke="#b0b0b0"/><line x1="1326.5" y1="359" x2="1326.5" y2="362" stroke="#b0b0b0"/><line x1="1345.5" y1="359" x2="1345.5" y2="362" stroke="#b0b0b0"/><line x1="1354.5" y1="359" x2="1354.5" y2="362" stroke="#b0b0b0"/><line x1="1364.5" y1="359" x2="1364.5" y2="362" stroke="#b0b0b0"/><line x1="1373.5" y1="359" x2="1373.5" y2="362" stroke="#b0b0b0"/><line x1="1392.5" y1="359" x2="1392.5" y2="362" stroke="#b0b0b0"/><line x1="1401.5" y1="359" x2="1401.5" y2="362" stroke="#b0b0b0"/><line x1="1411.5" y1="359" x2="1411.5" y2="362" stroke="#b0b0b0"/><line x1="1420.5" y1="359" x2="1420.5" y2="362" stroke="#b0b0b0"/><line x1="1439.5" y1="359" x2="1439.5" y2="362" stroke="#b0b0b0"/><line x1="1449.5" y1="359" x2="1449.5" y2="362" stroke="#b0b0b0"/><line x1="1458.5" y1="359" x2="1458.5" y2="362" stroke="#b0b0b0"/><line x1="1468.5" y1="359" x2="1468.5" y2="362" stroke="#b0b0b0"/><line x1="1486.5" y1="359" x2="1486.5" y2="362" stroke="#b0b0b0"/><line x1="1496.5" y1="359" x2="1496.5" y2="362" stroke="#b0b0b0"/><line x1="1505.5" y1="359" x2="1505.5" y2="362" stroke="#b0b0b0"/><line x1="1515.5" y1="359" x2="1515.5" y2="362" stroke="#b0b0b0"/><line x1="1534.5" y1="359" x2="1534.5" y2="362" stroke="#b0b0b0"/><line x1="1543.5" y1="359" x2="1543.5" y2="362" stroke="#b0b0b0"/><line x1="1553.5" y1="359" x2="1553.5" y2="362" stroke="#b0b0b0"/><line x1="1562.5" y1="359" x2="1562.5" y2="362" stroke="#b0b0b0"/><line x1="1581.5" y1="359" x2="1581.5" y2="362" stroke="#b0b0b0"/><line x1="1590.5" y1="359" x2="1590.5" y2="362" stroke="#b0b0b0"/><line x1="1600.5" y1="359" x2="1600.5" y2="362" stroke="#b0b0b0"/><line x1="1609.5" y1="359" x2="1609.5" y2="362" stroke="#b0b0b0"/><line x1="1628.5" y1="359" x2="1628.5" y2="362" stroke="#b0b0b0"/><line x1="1638.5" y1="359" x2="1638.5" y2="362" stroke="#b0b0b0"/><line x1="1647.5" y1="359" x2="1647.5" y2="362" stroke="#b0b0b0"/><line x1="1657.5" y1="359" x2="1657.5" y2="362" stroke="#b0b0b0"/><line x1="1675.5" y1="359" x2="1675.5" y2="362" stroke="#b0b0b0"/><line x1="1241.5" y1="359" x2="1241.5" y2="364.5" stroke="#b0b0b0"/><line x1="1288.5" y1="359" x2="1288.5" y2="364.5" stroke="#b0b0b0"/><line x1="1336.5" y1="359" x2="1336.5" y2="364.5" stroke="#b0b0b0"/><line x1="1383.5" y1="359" x2="1383.5" y2="364.5" stroke="#b0b0b0"/><line x1="1430.5" y1="359" x2="1430.5" y2="364.5" stroke="#b0b0b0"/><line x1="1477.5" y1="359" x2="1477.5" y2="364.5" stroke="#b0b0b0"/><line x1="1524.5" y1="359" x2="1524.5" y2="364.5" stroke="#b0b0b0"/><line x1="1572.5" y1="359" x2="1572.5" y2="364.5" stroke="#b0b0b0"/><line x1="1619.5" y1="359" x2="1619.5" y2="364.5" stroke="#b0b0b0"/><line x1="1666.5" y1="359" x2="1666.5" y2="364.5" stroke="#b0b0b0"/><rect x="1211.5" y="298.5" width="171" height="47" fill="#fff" stroke="#c8c8c8"/><rect x="1225.5" y="306.5" width="14" height="14" fill="#fff" stroke="#1a6ac0" stroke-width="1"/><path d="M1228.8 313.6 L1232.4 316.6 L1236.6 311.2" fill="none" stroke="#1a6ac0" stroke-width="2.3" stroke-linejoin="round"/><rect x="1225.5" y="324.5" width="14" height="14" fill="#fff" stroke="#b8964a" stroke-width="1"/><path d="M1228.8 331.6 L1232.4 334.6 L1236.6 329.2" fill="none" stroke="#b8964a" stroke-width="2.3" stroke-linejoin="round"/></svg>
<div class="t" style="top:157.59px;font-size:10.7px;color:#222;left:1690.2px;">100%</div>
<div class="t" style="top:196.29px;font-size:10.7px;color:#222;left:1690.2px;">80%</div>
<div class="t" style="top:234.49px;font-size:10.7px;color:#222;left:1690.2px;">60%</div>
<div class="t" style="top:272.19px;font-size:10.7px;color:#222;left:1690.2px;">40%</div>
<div class="t" style="top:310.69px;font-size:10.7px;color:#222;left:1690.2px;">20%</div>
<div class="t" style="top:349.19px;font-size:10.7px;color:#222;left:1690.2px;">0%</div>
<div class="t" style="top:313.09px;font-size:10.7px;color:#222;left:1246px;">Percent of Enabled Cores</div>
<div class="t" style="top:330.69px;font-size:10.7px;color:#222;left:1246px;">Percent of Parked Cores</div>
<div class="t" style="top:375.39px;font-size:10.7px;color:#222;letter-spacing:0.15px;left:1210.9px;">10:41:54 AM</div>
<div class="t" style="top:375.39px;font-size:10.7px;color:#222;letter-spacing:0.15px;left:1305.8px;">10:42:06 AM</div>
<div class="t" style="top:375.39px;font-size:10.7px;color:#222;letter-spacing:0.15px;left:1399.6px;">10:42:18 AM</div>
<div class="t" style="top:375.39px;font-size:10.7px;color:#222;letter-spacing:0.15px;left:1493.8px;">10:42:30 AM</div>
<div class="t" style="top:375.39px;font-size:10.7px;color:#222;letter-spacing:0.15px;left:1588.7px;">10:42:42 AM</div>
<div class="t" style="top:390.09px;font-size:10.7px;color:#222;letter-spacing:0.15px;left:1257.8px;">10:42:00 AM</div>
<div class="t" style="top:390.09px;font-size:10.7px;color:#222;letter-spacing:0.15px;left:1352.3px;">10:42:12 AM</div>
<div class="t" style="top:390.09px;font-size:10.7px;color:#222;letter-spacing:0.15px;left:1446.5px;">10:42:24 AM</div>
<div class="t" style="top:390.09px;font-size:10.7px;color:#222;letter-spacing:0.15px;left:1541px;">10:42:36 AM</div>
<div class="t" style="top:390.09px;font-size:10.7px;color:#222;letter-spacing:0.15px;left:1635.2px;">10:42:48 AM</div>
<div style="position:absolute;left:1198px;top:417px;width:529px;height:25px;background:#f0f0f0;border-bottom:1px solid #d4d4d4;box-sizing:border-box;"></div>
<div style="position:absolute;left:1198px;top:442px;width:529px;height:421px;background:#fff;"></div>
<div style="position:absolute;left:1222px;top:417px;width:1px;height:445px;background:#d4d4d4;"></div>
<div style="position:absolute;left:1306px;top:417px;width:1px;height:445px;background:#d4d4d4;"></div>
<div style="position:absolute;left:1380px;top:417px;width:1px;height:445px;background:#d4d4d4;"></div>
<div style="position:absolute;left:1560px;top:417px;width:1px;height:445px;background:#d4d4d4;"></div>
<div style="position:absolute;left:1307px;top:442px;width:73px;height:420px;background:#f5fbff;"></div>
<div class="t" style="top:428.81px;font-size:11.5px;color:#505050;font-weight:bold;letter-spacing:0.25px;left:1228.8px;">Name</div>
<div class="t" style="top:428.81px;font-size:11.5px;color:#505050;font-weight:bold;letter-spacing:0.25px;left:1143.6px;width:400px;text-align:center;">Current</div>
<div class="t" style="top:428.81px;font-size:11.5px;color:#505050;font-weight:bold;letter-spacing:0.25px;left:1270.3px;width:400px;text-align:center;">% Of Time In Enabled State</div>
<div class="t" style="top:428.81px;font-size:11.5px;color:#505050;font-weight:bold;letter-spacing:0.25px;left:1443.4px;width:400px;text-align:center;">% Of Time In Parked State</div>
<div class="t" style="top:451.69px;font-size:10.7px;color:#222;left:1228.6px;">P-Core 1 (T0)</div>
<div class="t" style="top:451.69px;font-size:10.7px;color:#2d50d0;left:1143.4px;width:400px;text-align:center;">Enabled</div>
<div style="position:absolute;left:1384px;top:445px;width:92.9px;height:14px;background:#3a7ed0;"></div>
<div class="t" style="top:451.69px;font-size:10.7px;color:#6b4a26;left:1270.3px;width:400px;text-align:center;">54.81%</div>
<div style="position:absolute;left:1384px;top:445px;width:92.9px;height:14px;overflow:hidden;"><div class="t" style="left:-113.7px;top:6.69px;width:400px;text-align:center;font-size:10.7px;color:#fff;">54.81%</div></div>
<div style="position:absolute;left:1564px;top:445px;width:71px;height:14px;background:#f76a45;"></div>
<div class="t" style="top:451.69px;font-size:10.7px;color:#6b4a26;left:1443.4px;width:400px;text-align:center;">45.19%</div>
<div style="position:absolute;left:1564px;top:445px;width:71px;height:14px;overflow:hidden;"><div class="t" style="left:-120.6px;top:6.69px;width:400px;text-align:center;font-size:10.7px;color:#fff;">45.19%</div></div>
<div style="position:absolute;left:1222px;top:462px;width:505px;height:1px;background:#d4d4d4;"></div>
<div class="t" style="top:472.69px;font-size:10.7px;color:#222;left:1228.6px;">P-Core 1 (T1)</div>
<div class="t" style="top:472.69px;font-size:10.7px;color:#2d50d0;left:1143.4px;width:400px;text-align:center;">Enabled</div>
<div style="position:absolute;left:1384px;top:466px;width:89.8px;height:14px;background:#3a7ed0;"></div>
<div class="t" style="top:472.69px;font-size:10.7px;color:#6b4a26;left:1270.3px;width:400px;text-align:center;">52.78%</div>
<div style="position:absolute;left:1384px;top:466px;width:89.8px;height:14px;overflow:hidden;"><div class="t" style="left:-113.7px;top:6.69px;width:400px;text-align:center;font-size:10.7px;color:#fff;">52.78%</div></div>
<div style="position:absolute;left:1564px;top:466px;width:73.5px;height:14px;background:#f76a45;"></div>
<div class="t" style="top:472.69px;font-size:10.7px;color:#6b4a26;left:1443.4px;width:400px;text-align:center;">47.22%</div>
<div style="position:absolute;left:1564px;top:466px;width:73.5px;height:14px;overflow:hidden;"><div class="t" style="left:-120.6px;top:6.69px;width:400px;text-align:center;font-size:10.7px;color:#fff;">47.22%</div></div>
<div style="position:absolute;left:1222px;top:483px;width:505px;height:1px;background:#d4d4d4;"></div>
<div class="t" style="top:493.69px;font-size:10.7px;color:#222;left:1228.6px;">P-Core 2 (T0)</div>
<div class="t" style="top:493.69px;font-size:10.7px;color:#2d50d0;left:1143.4px;width:400px;text-align:center;">Enabled</div>
<div style="position:absolute;left:1384px;top:487px;width:92.9px;height:14px;background:#3a7ed0;"></div>
<div class="t" style="top:493.69px;font-size:10.7px;color:#6b4a26;left:1270.3px;width:400px;text-align:center;">54.81%</div>
<div style="position:absolute;left:1384px;top:487px;width:92.9px;height:14px;overflow:hidden;"><div class="t" style="left:-113.7px;top:6.69px;width:400px;text-align:center;font-size:10.7px;color:#fff;">54.81%</div></div>
<div style="position:absolute;left:1564px;top:487px;width:71px;height:14px;background:#f76a45;"></div>
<div class="t" style="top:493.69px;font-size:10.7px;color:#6b4a26;left:1443.4px;width:400px;text-align:center;">45.19%</div>
<div style="position:absolute;left:1564px;top:487px;width:71px;height:14px;overflow:hidden;"><div class="t" style="left:-120.6px;top:6.69px;width:400px;text-align:center;font-size:10.7px;color:#fff;">45.19%</div></div>
<div style="position:absolute;left:1222px;top:504px;width:505px;height:1px;background:#d4d4d4;"></div>
<div class="t" style="top:514.69px;font-size:10.7px;color:#222;left:1228.6px;">P-Core 2 (T1)</div>
<div class="t" style="top:514.69px;font-size:10.7px;color:#2d50d0;left:1143.4px;width:400px;text-align:center;">Enabled</div>
<div style="position:absolute;left:1384px;top:508px;width:82px;height:14px;background:#3a7ed0;"></div>
<div class="t" style="top:514.69px;font-size:10.7px;color:#6b4a26;left:1270.3px;width:400px;text-align:center;">48.57%</div>
<div style="position:absolute;left:1384px;top:508px;width:82px;height:14px;overflow:hidden;"><div class="t" style="left:-113.7px;top:6.69px;width:400px;text-align:center;font-size:10.7px;color:#fff;">48.57%</div></div>
<div style="position:absolute;left:1564px;top:508px;width:80.7px;height:14px;background:#f76a45;"></div>
<div class="t" style="top:514.69px;font-size:10.7px;color:#6b4a26;left:1443.4px;width:400px;text-align:center;">51.43%</div>
<div style="position:absolute;left:1564px;top:508px;width:80.7px;height:14px;overflow:hidden;"><div class="t" style="left:-120.6px;top:6.69px;width:400px;text-align:center;font-size:10.7px;color:#fff;">51.43%</div></div>
<div style="position:absolute;left:1222px;top:525px;width:505px;height:1px;background:#d4d4d4;"></div>
<div class="t" style="top:535.69px;font-size:10.7px;color:#222;left:1228.6px;">P-Core 3 (T0)</div>
<div class="t" style="top:535.69px;font-size:10.7px;color:#2d50d0;left:1143.4px;width:400px;text-align:center;">Enabled</div>
<div style="position:absolute;left:1384px;top:529px;width:169.9px;height:14px;background:#3a7ed0;"></div>
<div class="t" style="top:535.69px;font-size:10.7px;color:#6b4a26;left:1270.3px;width:400px;text-align:center;">98.48%</div>
<div style="position:absolute;left:1384px;top:529px;width:169.9px;height:14px;overflow:hidden;"><div class="t" style="left:-113.7px;top:6.69px;width:400px;text-align:center;font-size:10.7px;color:#fff;">98.48%</div></div>
<div class="t" style="top:535.69px;font-size:10.7px;color:#6b4a26;left:1443.4px;width:400px;text-align:center;">1.52%</div>
<div style="position:absolute;left:1222px;top:546px;width:505px;height:1px;background:#d4d4d4;"></div>
<div class="t" style="top:556.69px;font-size:10.7px;color:#222;left:1228.6px;">P-Core 3 (T1)</div>
<div class="t" style="top:556.69px;font-size:10.7px;color:#2d50d0;left:1143.4px;width:400px;text-align:center;">Enabled</div>
<div style="position:absolute;left:1384px;top:550px;width:168px;height:14px;background:#3a7ed0;"></div>
<div class="t" style="top:556.69px;font-size:10.7px;color:#6b4a26;left:1270.3px;width:400px;text-align:center;">97.3%</div>
<div style="position:absolute;left:1384px;top:550px;width:168px;height:14px;overflow:hidden;"><div class="t" style="left:-113.7px;top:6.69px;width:400px;text-align:center;font-size:10.7px;color:#fff;">97.3%</div></div>
<div style="position:absolute;left:1564px;top:550px;width:1.6px;height:14px;background:#f76a45;"></div>
<div class="t" style="top:556.69px;font-size:10.7px;color:#6b4a26;left:1443.4px;width:400px;text-align:center;">2.7%</div>
<div style="position:absolute;left:1564px;top:550px;width:1.6px;height:14px;overflow:hidden;"><div class="t" style="left:-120.6px;top:6.69px;width:400px;text-align:center;font-size:10.7px;color:#fff;">2.7%</div></div>
<div style="position:absolute;left:1222px;top:567px;width:505px;height:1px;background:#d4d4d4;"></div>
<div class="t" style="top:577.69px;font-size:10.7px;color:#222;left:1228.6px;">P-Core 4 (T0)</div>
<div class="t" style="top:577.69px;font-size:10.7px;color:#2d50d0;left:1143.4px;width:400px;text-align:center;">Enabled</div>
<div style="position:absolute;left:1384px;top:571px;width:172.7px;height:14px;background:#3a7ed0;"></div>
<div class="t" style="top:577.69px;font-size:10.7px;color:#6b4a26;left:1270.3px;width:400px;text-align:center;">100%</div>
<div style="position:absolute;left:1384px;top:571px;width:172.7px;height:14px;overflow:hidden;"><div class="t" style="left:-113.7px;top:6.69px;width:400px;text-align:center;font-size:10.7px;color:#fff;">100%</div></div>
<div class="t" style="top:577.69px;font-size:10.7px;color:#6b4a26;left:1443.4px;width:400px;text-align:center;">0%</div>
<div style="position:absolute;left:1222px;top:588px;width:505px;height:1px;background:#d4d4d4;"></div>
<div class="t" style="top:598.69px;font-size:10.7px;color:#222;left:1228.6px;">P-Core 4 (T1)</div>
<div class="t" style="top:598.69px;font-size:10.7px;color:#2d50d0;left:1143.4px;width:400px;text-align:center;">Enabled</div>
<div style="position:absolute;left:1384px;top:592px;width:172.7px;height:14px;background:#3a7ed0;"></div>
<div class="t" style="top:598.69px;font-size:10.7px;color:#6b4a26;left:1270.3px;width:400px;text-align:center;">100%</div>
<div style="position:absolute;left:1384px;top:592px;width:172.7px;height:14px;overflow:hidden;"><div class="t" style="left:-113.7px;top:6.69px;width:400px;text-align:center;font-size:10.7px;color:#fff;">100%</div></div>
<div class="t" style="top:598.69px;font-size:10.7px;color:#6b4a26;left:1443.4px;width:400px;text-align:center;">0%</div>
<div style="position:absolute;left:1222px;top:609px;width:505px;height:1px;background:#d4d4d4;"></div>
<div class="t" style="top:619.69px;font-size:10.7px;color:#222;left:1228.6px;">P-Core 5 (T0)</div>
<div class="t" style="top:619.69px;font-size:10.7px;color:#2d50d0;left:1143.4px;width:400px;text-align:center;">Enabled</div>
<div style="position:absolute;left:1384px;top:613px;width:92.9px;height:14px;background:#3a7ed0;"></div>
<div class="t" style="top:619.69px;font-size:10.7px;color:#6b4a26;left:1270.3px;width:400px;text-align:center;">54.81%</div>
<div style="position:absolute;left:1384px;top:613px;width:92.9px;height:14px;overflow:hidden;"><div class="t" style="left:-113.7px;top:6.69px;width:400px;text-align:center;font-size:10.7px;color:#fff;">54.81%</div></div>
<div style="position:absolute;left:1564px;top:613px;width:71px;height:14px;background:#f76a45;"></div>
<div class="t" style="top:619.69px;font-size:10.7px;color:#6b4a26;left:1443.4px;width:400px;text-align:center;">45.19%</div>
<div style="position:absolute;left:1564px;top:613px;width:71px;height:14px;overflow:hidden;"><div class="t" style="left:-120.6px;top:6.69px;width:400px;text-align:center;font-size:10.7px;color:#fff;">45.19%</div></div>
<div style="position:absolute;left:1222px;top:630px;width:505px;height:1px;background:#d4d4d4;"></div>
<div class="t" style="top:640.69px;font-size:10.7px;color:#222;left:1228.6px;">P-Core 5 (T1)</div>
<div class="t" style="top:640.69px;font-size:10.7px;color:#2d50d0;left:1143.4px;width:400px;text-align:center;">Enabled</div>
<div style="position:absolute;left:1384px;top:634px;width:92.9px;height:14px;background:#3a7ed0;"></div>
<div class="t" style="top:640.69px;font-size:10.7px;color:#6b4a26;left:1270.3px;width:400px;text-align:center;">54.81%</div>
<div style="position:absolute;left:1384px;top:634px;width:92.9px;height:14px;overflow:hidden;"><div class="t" style="left:-113.7px;top:6.69px;width:400px;text-align:center;font-size:10.7px;color:#fff;">54.81%</div></div>
<div style="position:absolute;left:1564px;top:634px;width:71px;height:14px;background:#f76a45;"></div>
<div class="t" style="top:640.69px;font-size:10.7px;color:#6b4a26;left:1443.4px;width:400px;text-align:center;">45.19%</div>
<div style="position:absolute;left:1564px;top:634px;width:71px;height:14px;overflow:hidden;"><div class="t" style="left:-120.6px;top:6.69px;width:400px;text-align:center;font-size:10.7px;color:#fff;">45.19%</div></div>
<div style="position:absolute;left:1222px;top:651px;width:505px;height:1px;background:#d4d4d4;"></div>
<div class="t" style="top:661.69px;font-size:10.7px;color:#222;left:1228.6px;">P-Core 6 (T0)</div>
<div class="t" style="top:661.69px;font-size:10.7px;color:#2d50d0;left:1143.4px;width:400px;text-align:center;">Enabled</div>
<div style="position:absolute;left:1384px;top:655px;width:92.9px;height:14px;background:#3a7ed0;"></div>
<div class="t" style="top:661.69px;font-size:10.7px;color:#6b4a26;left:1270.3px;width:400px;text-align:center;">54.81%</div>
<div style="position:absolute;left:1384px;top:655px;width:92.9px;height:14px;overflow:hidden;"><div class="t" style="left:-113.7px;top:6.69px;width:400px;text-align:center;font-size:10.7px;color:#fff;">54.81%</div></div>
<div style="position:absolute;left:1564px;top:655px;width:71px;height:14px;background:#f76a45;"></div>
<div class="t" style="top:661.69px;font-size:10.7px;color:#6b4a26;left:1443.4px;width:400px;text-align:center;">45.19%</div>
<div style="position:absolute;left:1564px;top:655px;width:71px;height:14px;overflow:hidden;"><div class="t" style="left:-120.6px;top:6.69px;width:400px;text-align:center;font-size:10.7px;color:#fff;">45.19%</div></div>
<div style="position:absolute;left:1222px;top:672px;width:505px;height:1px;background:#d4d4d4;"></div>
<div class="t" style="top:682.69px;font-size:10.7px;color:#222;left:1228.6px;">P-Core 6 (T1)</div>
<div class="t" style="top:682.69px;font-size:10.7px;color:#2d50d0;left:1143.4px;width:400px;text-align:center;">Enabled</div>
<div style="position:absolute;left:1384px;top:676px;width:92.9px;height:14px;background:#3a7ed0;"></div>
<div class="t" style="top:682.69px;font-size:10.7px;color:#6b4a26;left:1270.3px;width:400px;text-align:center;">54.81%</div>
<div style="position:absolute;left:1384px;top:676px;width:92.9px;height:14px;overflow:hidden;"><div class="t" style="left:-113.7px;top:6.69px;width:400px;text-align:center;font-size:10.7px;color:#fff;">54.81%</div></div>
<div style="position:absolute;left:1564px;top:676px;width:71px;height:14px;background:#f76a45;"></div>
<div class="t" style="top:682.69px;font-size:10.7px;color:#6b4a26;left:1443.4px;width:400px;text-align:center;">45.19%</div>
<div style="position:absolute;left:1564px;top:676px;width:71px;height:14px;overflow:hidden;"><div class="t" style="left:-120.6px;top:6.69px;width:400px;text-align:center;font-size:10.7px;color:#fff;">45.19%</div></div>
<div style="position:absolute;left:1222px;top:693px;width:505px;height:1px;background:#d4d4d4;"></div>
<div class="t" style="top:703.69px;font-size:10.7px;color:#222;left:1228.6px;">E-Core 7 (T0)</div>
<div class="t" style="top:703.69px;font-size:10.7px;color:#2d50d0;left:1143.4px;width:400px;text-align:center;">Enabled</div>
<div style="position:absolute;left:1384px;top:697px;width:41px;height:14px;background:#3a7ed0;"></div>
<div class="t" style="top:703.69px;font-size:10.7px;color:#6b4a26;left:1270.3px;width:400px;text-align:center;">24.96%</div>
<div style="position:absolute;left:1384px;top:697px;width:41px;height:14px;overflow:hidden;"><div class="t" style="left:-113.7px;top:6.69px;width:400px;text-align:center;font-size:10.7px;color:#fff;">24.96%</div></div>
<div style="position:absolute;left:1564px;top:697px;width:118.9px;height:14px;background:#f76a45;"></div>
<div class="t" style="top:703.69px;font-size:10.7px;color:#6b4a26;left:1443.4px;width:400px;text-align:center;">75.04%</div>
<div style="position:absolute;left:1564px;top:697px;width:118.9px;height:14px;overflow:hidden;"><div class="t" style="left:-120.6px;top:6.69px;width:400px;text-align:center;font-size:10.7px;color:#fff;">75.04%</div></div>
<div style="position:absolute;left:1222px;top:714px;width:505px;height:1px;background:#d4d4d4;"></div>
<div class="t" style="top:724.69px;font-size:10.7px;color:#222;left:1228.6px;">E-Core 8 (T0)</div>
<div class="t" style="top:724.69px;font-size:10.7px;color:#2d50d0;left:1143.4px;width:400px;text-align:center;">Enabled</div>
<div style="position:absolute;left:1384px;top:718px;width:41px;height:14px;background:#3a7ed0;"></div>
<div class="t" style="top:724.69px;font-size:10.7px;color:#6b4a26;left:1270.3px;width:400px;text-align:center;">24.96%</div>
<div style="position:absolute;left:1384px;top:718px;width:41px;height:14px;overflow:hidden;"><div class="t" style="left:-113.7px;top:6.69px;width:400px;text-align:center;font-size:10.7px;color:#fff;">24.96%</div></div>
<div style="position:absolute;left:1564px;top:718px;width:118.9px;height:14px;background:#f76a45;"></div>
<div class="t" style="top:724.69px;font-size:10.7px;color:#6b4a26;left:1443.4px;width:400px;text-align:center;">75.04%</div>
<div style="position:absolute;left:1564px;top:718px;width:118.9px;height:14px;overflow:hidden;"><div class="t" style="left:-120.6px;top:6.69px;width:400px;text-align:center;font-size:10.7px;color:#fff;">75.04%</div></div>
<div style="position:absolute;left:1222px;top:735px;width:505px;height:1px;background:#d4d4d4;"></div>
<div class="t" style="top:745.69px;font-size:10.7px;color:#222;left:1228.6px;">E-Core 9 (T0)</div>
<div class="t" style="top:745.69px;font-size:10.7px;color:#2d50d0;left:1143.4px;width:400px;text-align:center;">Enabled</div>
<div style="position:absolute;left:1384px;top:739px;width:41px;height:14px;background:#3a7ed0;"></div>
<div class="t" style="top:745.69px;font-size:10.7px;color:#6b4a26;left:1270.3px;width:400px;text-align:center;">24.96%</div>
<div style="position:absolute;left:1384px;top:739px;width:41px;height:14px;overflow:hidden;"><div class="t" style="left:-113.7px;top:6.69px;width:400px;text-align:center;font-size:10.7px;color:#fff;">24.96%</div></div>
<div style="position:absolute;left:1564px;top:739px;width:118.9px;height:14px;background:#f76a45;"></div>
<div class="t" style="top:745.69px;font-size:10.7px;color:#6b4a26;left:1443.4px;width:400px;text-align:center;">75.04%</div>
<div style="position:absolute;left:1564px;top:739px;width:118.9px;height:14px;overflow:hidden;"><div class="t" style="left:-120.6px;top:6.69px;width:400px;text-align:center;font-size:10.7px;color:#fff;">75.04%</div></div>
<div style="position:absolute;left:1222px;top:756px;width:505px;height:1px;background:#d4d4d4;"></div>
<div class="t" style="top:766.69px;font-size:10.7px;color:#222;left:1228.6px;">E-Core 10 (T0)</div>
<div class="t" style="top:766.69px;font-size:10.7px;color:#2d50d0;left:1143.4px;width:400px;text-align:center;">Enabled</div>
<div style="position:absolute;left:1384px;top:760px;width:41px;height:14px;background:#3a7ed0;"></div>
<div class="t" style="top:766.69px;font-size:10.7px;color:#6b4a26;left:1270.3px;width:400px;text-align:center;">24.96%</div>
<div style="position:absolute;left:1384px;top:760px;width:41px;height:14px;overflow:hidden;"><div class="t" style="left:-113.7px;top:6.69px;width:400px;text-align:center;font-size:10.7px;color:#fff;">24.96%</div></div>
<div style="position:absolute;left:1564px;top:760px;width:118.9px;height:14px;background:#f76a45;"></div>
<div class="t" style="top:766.69px;font-size:10.7px;color:#6b4a26;left:1443.4px;width:400px;text-align:center;">75.04%</div>
<div style="position:absolute;left:1564px;top:760px;width:118.9px;height:14px;overflow:hidden;"><div class="t" style="left:-120.6px;top:6.69px;width:400px;text-align:center;font-size:10.7px;color:#fff;">75.04%</div></div>
<div style="position:absolute;left:1222px;top:777px;width:505px;height:1px;background:#d4d4d4;"></div>
<div class="t" style="top:787.69px;font-size:10.7px;color:#222;left:1228.6px;">E-Core 11 (T0)</div>
<div class="t" style="top:787.69px;font-size:10.7px;color:#2d50d0;left:1143.4px;width:400px;text-align:center;">Enabled</div>
<div style="position:absolute;left:1384px;top:781px;width:41px;height:14px;background:#3a7ed0;"></div>
<div class="t" style="top:787.69px;font-size:10.7px;color:#6b4a26;left:1270.3px;width:400px;text-align:center;">24.96%</div>
<div style="position:absolute;left:1384px;top:781px;width:41px;height:14px;overflow:hidden;"><div class="t" style="left:-113.7px;top:6.69px;width:400px;text-align:center;font-size:10.7px;color:#fff;">24.96%</div></div>
<div style="position:absolute;left:1564px;top:781px;width:118.9px;height:14px;background:#f76a45;"></div>
<div class="t" style="top:787.69px;font-size:10.7px;color:#6b4a26;left:1443.4px;width:400px;text-align:center;">75.04%</div>
<div style="position:absolute;left:1564px;top:781px;width:118.9px;height:14px;overflow:hidden;"><div class="t" style="left:-120.6px;top:6.69px;width:400px;text-align:center;font-size:10.7px;color:#fff;">75.04%</div></div>
<div style="position:absolute;left:1222px;top:798px;width:505px;height:1px;background:#d4d4d4;"></div>
<div class="t" style="top:808.69px;font-size:10.7px;color:#222;left:1228.6px;">E-Core 12 (T0)</div>
<div class="t" style="top:808.69px;font-size:10.7px;color:#2d50d0;left:1143.4px;width:400px;text-align:center;">Enabled</div>
<div style="position:absolute;left:1384px;top:802px;width:41px;height:14px;background:#3a7ed0;"></div>
<div class="t" style="top:808.69px;font-size:10.7px;color:#6b4a26;left:1270.3px;width:400px;text-align:center;">24.96%</div>
<div style="position:absolute;left:1384px;top:802px;width:41px;height:14px;overflow:hidden;"><div class="t" style="left:-113.7px;top:6.69px;width:400px;text-align:center;font-size:10.7px;color:#fff;">24.96%</div></div>
<div style="position:absolute;left:1564px;top:802px;width:118.9px;height:14px;background:#f76a45;"></div>
<div class="t" style="top:808.69px;font-size:10.7px;color:#6b4a26;left:1443.4px;width:400px;text-align:center;">75.04%</div>
<div style="position:absolute;left:1564px;top:802px;width:118.9px;height:14px;overflow:hidden;"><div class="t" style="left:-120.6px;top:6.69px;width:400px;text-align:center;font-size:10.7px;color:#fff;">75.04%</div></div>
<div style="position:absolute;left:1222px;top:819px;width:505px;height:1px;background:#d4d4d4;"></div>
<div class="t" style="top:829.69px;font-size:10.7px;color:#222;left:1228.6px;">E-Core 13 (T0)</div>
<div class="t" style="top:829.69px;font-size:10.7px;color:#2d50d0;left:1143.4px;width:400px;text-align:center;">Enabled</div>
<div style="position:absolute;left:1384px;top:823px;width:41px;height:14px;background:#3a7ed0;"></div>
<div class="t" style="top:829.69px;font-size:10.7px;color:#6b4a26;left:1270.3px;width:400px;text-align:center;">24.96%</div>
<div style="position:absolute;left:1384px;top:823px;width:41px;height:14px;overflow:hidden;"><div class="t" style="left:-113.7px;top:6.69px;width:400px;text-align:center;font-size:10.7px;color:#fff;">24.96%</div></div>
<div style="position:absolute;left:1564px;top:823px;width:118.9px;height:14px;background:#f76a45;"></div>
<div class="t" style="top:829.69px;font-size:10.7px;color:#6b4a26;left:1443.4px;width:400px;text-align:center;">75.04%</div>
<div style="position:absolute;left:1564px;top:823px;width:118.9px;height:14px;overflow:hidden;"><div class="t" style="left:-120.6px;top:6.69px;width:400px;text-align:center;font-size:10.7px;color:#fff;">75.04%</div></div>
<div style="position:absolute;left:1222px;top:840px;width:505px;height:1px;background:#d4d4d4;"></div>
<div class="t" style="top:850.69px;font-size:10.7px;color:#222;left:1228.6px;">E-Core 14 (T0)</div>
<div class="t" style="top:850.69px;font-size:10.7px;color:#2d50d0;left:1143.4px;width:400px;text-align:center;">Enabled</div>
<div style="position:absolute;left:1384px;top:844px;width:41px;height:14px;background:#3a7ed0;"></div>
<div class="t" style="top:850.69px;font-size:10.7px;color:#6b4a26;left:1270.3px;width:400px;text-align:center;">24.96%</div>
<div style="position:absolute;left:1384px;top:844px;width:41px;height:14px;overflow:hidden;"><div class="t" style="left:-113.7px;top:6.69px;width:400px;text-align:center;font-size:10.7px;color:#fff;">24.96%</div></div>
<div style="position:absolute;left:1564px;top:844px;width:118.9px;height:14px;background:#f76a45;"></div>
<div class="t" style="top:850.69px;font-size:10.7px;color:#6b4a26;left:1443.4px;width:400px;text-align:center;">75.04%</div>
<div style="position:absolute;left:1564px;top:844px;width:118.9px;height:14px;overflow:hidden;"><div class="t" style="left:-120.6px;top:6.69px;width:400px;text-align:center;font-size:10.7px;color:#fff;">75.04%</div></div>
<div style="position:absolute;left:1222px;top:861px;width:505px;height:1px;background:#d4d4d4;"></div>
<div style="position:absolute;left:1195px;top:866px;width:537px;height:25.7px;background:#dadada;"></div>
<div style="position:absolute;left:1197.9px;top:866px;width:102.5px;height:23.5px;background:#f0f0f0;border:1px solid #c4c4c4;border-top:none;box-sizing:border-box;"></div>
<div style="position:absolute;left:1300.4px;top:867px;width:142.1px;height:21.5px;background:#ececec;border:1px solid #c8c8c8;border-top:none;box-sizing:border-box;"></div>
<div style="position:absolute;left:1443.6px;top:867px;width:80.7px;height:21.5px;background:#ececec;border:1px solid #c8c8c8;border-top:none;box-sizing:border-box;"></div>
<div class="t" style="top:878.29px;font-size:10.7px;color:#222;left:1208.8px;">CPU Core Parking</div>
<div class="t" style="top:877.29px;font-size:10.7px;color:#222;left:1310.7px;">CPU Workload Delegation</div>
<div class="t" style="top:877.29px;font-size:10.7px;color:#222;left:1453.4px;">Memory Data</div>
<div style="position:absolute;left:0px;top:893.7px;width:1732px;height:20.3px;background:#f0f0f0;"></div>
<div style="position:absolute;left:727px;top:891.7px;width:1005px;height:2px;background:#fff;"></div>
<div class="t" style="top:905.29px;font-size:10.7px;color:#222;left:4.6px;">Current version:</div>
<div class="t" style="top:905.29px;font-size:10.7px;color:#222;left:94.8px;">4.9.0.0</div>
<div class="t" style="top:905.29px;font-size:10.7px;color:#222;font-weight:bold;left:140px;">|</div>
<div class="t" style="top:905.29px;font-size:10.7px;color:#222;font-weight:bold;left:149.2px;">C-State:</div>
<div class="t" style="top:905.29px;font-size:10.7px;color:#222;left:197px;">C2:</div>
<div class="t" style="top:905.29px;font-size:10.7px;color:#2d50d0;left:224px;">0.7 %</div>
<div class="t" style="top:905.29px;font-size:10.7px;color:#999;left:262.4px;">|</div>
<div class="t" style="top:905.29px;font-size:10.7px;color:#222;left:275px;">C3:</div>
<div class="t" style="top:905.29px;font-size:10.7px;color:#2d50d0;left:301.8px;">0.0 %</div>
<div class="t" style="top:905.29px;font-size:10.7px;color:#999;left:339.7px;">|</div>
<div class="t" style="top:905.29px;font-size:10.7px;color:#222;left:352.4px;">C6:</div>
<div class="t" style="top:905.29px;font-size:10.7px;color:#2d50d0;left:380.3px;">0.0 %</div>
<div class="t" style="top:905.29px;font-size:10.7px;color:#999;left:418.7px;">|</div>
<div class="t" style="top:905.29px;font-size:10.7px;color:#222;left:431px;">C7:</div>
<div class="t" style="top:905.29px;font-size:10.7px;color:#2d50d0;left:458.3px;">0.0 %</div>
<div class="t" style="top:905.29px;font-size:10.7px;color:#999;left:496px;">|</div>
<div class="t" style="top:905.12px;font-size:11.2px;color:#222;left:511px;">Configure</div>
<svg style="left:566px;top:904px" width="6" height="3"><path d="M0 0 H6 L3 3 Z" fill="#333"/></svg>
<div class="t" style="top:905.60px;font-size:9.8px;color:#222;left:1321px;width:400px;text-align:right;">Copyright © 2024 CoderBag LLC</div>
</body></html>
